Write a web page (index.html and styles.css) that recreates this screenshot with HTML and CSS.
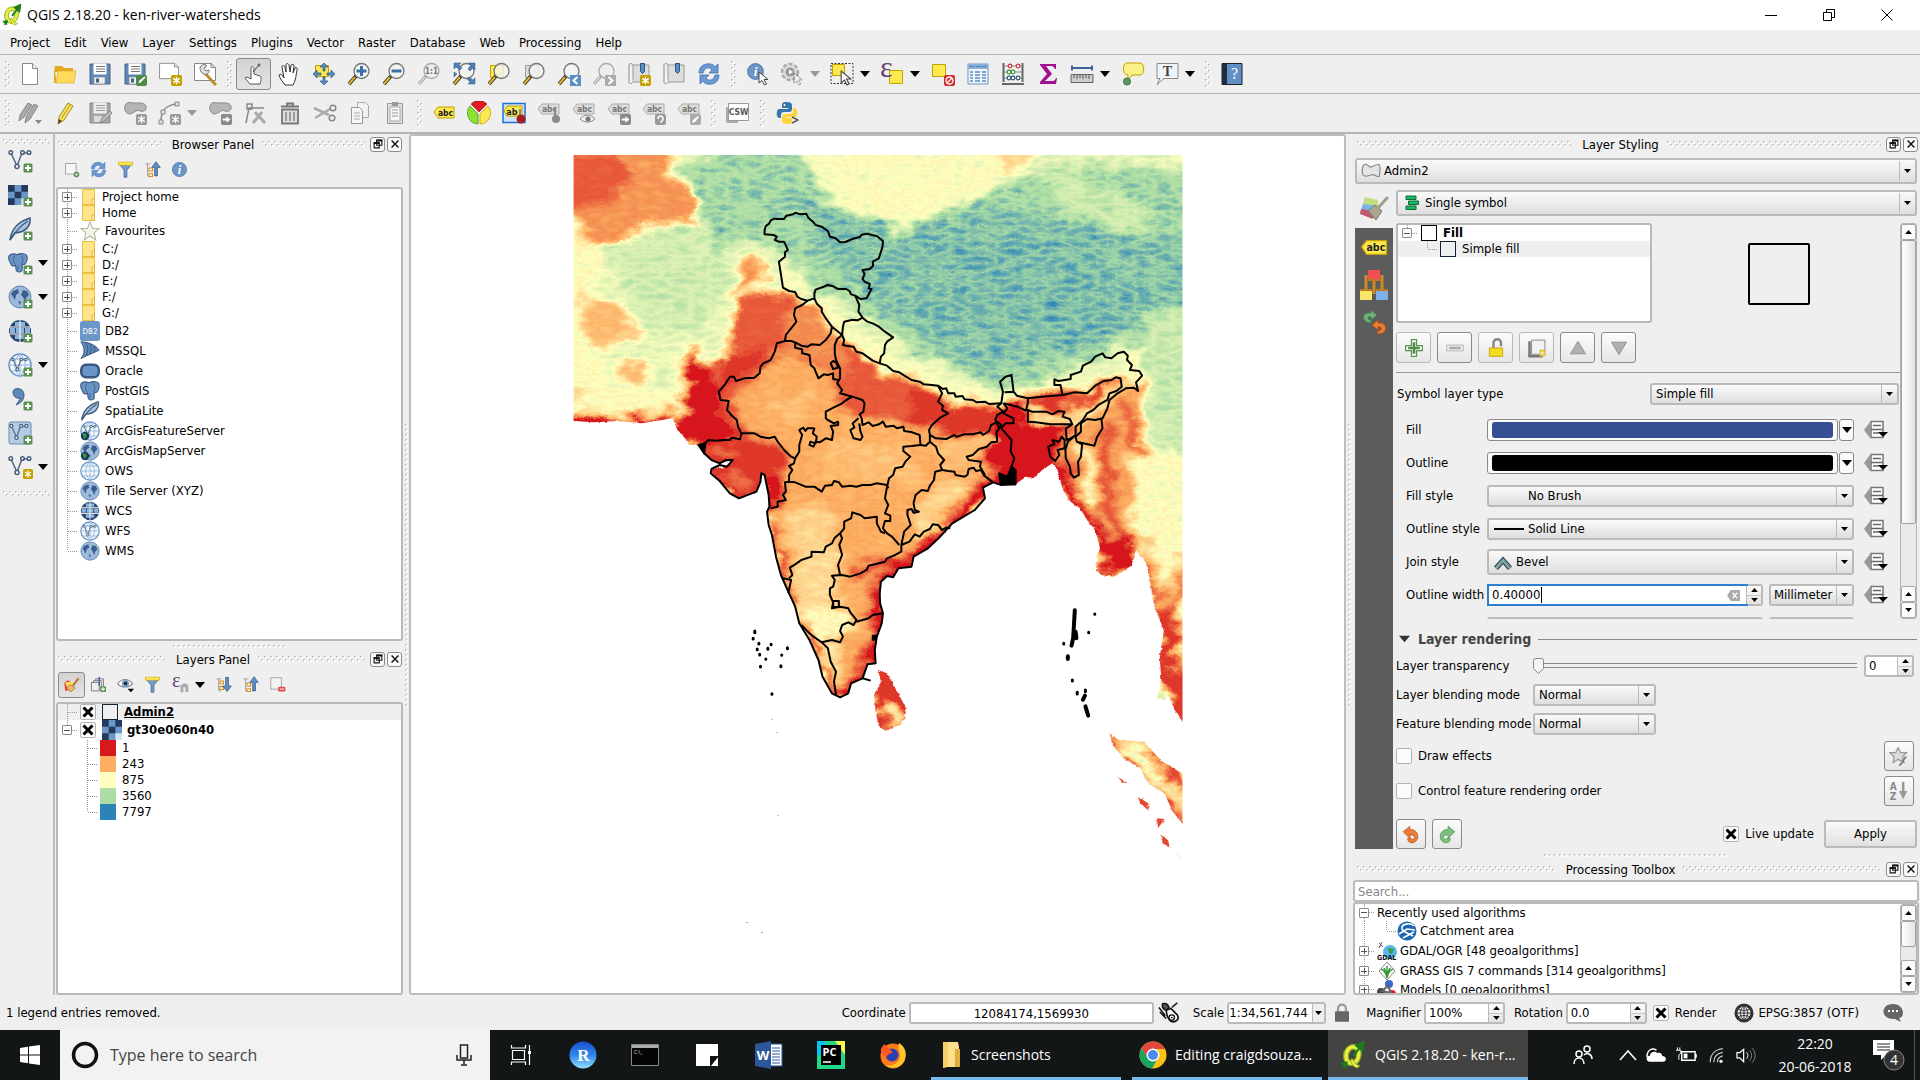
FILE: index.html
```
<!DOCTYPE html>
<html lang="en">
<head>
<meta charset="utf-8">
<title>QGIS 2.18.20 - ken-river-watersheds</title>
<link rel="stylesheet" href="styles.css">
</head>
<body>
<svg class="sprite" aria-hidden="true">
<symbol id="plus" viewBox="0 0 10 10"><rect x=".5" y=".5" width="9" height="9" rx="1.5" fill="#5a9150"/><path d="M5 2v6M2 5h6" stroke="#fff" stroke-width="1.8"/></symbol>
<symbol id="sun" viewBox="0 0 10 10"><rect width="10" height="10" rx="1.5" fill="#c4a000"/><path d="M5 1.500v7M2 3l6 4M8 3l-6 4" stroke="#fff" stroke-width="1.3"/></symbol>
<symbol id="gsun" viewBox="0 0 10 10"><rect width="10" height="10" rx="1.5" fill="#9a9a9a"/><path d="M5 1.500v7M2 3l6 4M8 3l-6 4" stroke="#fff" stroke-width="1.2"/></symbol>
<symbol id="garrow" viewBox="0 0 10 10"><rect width="10" height="10" rx="1.5" fill="#8a8a8a"/><path d="M1.500 4h3.500V2l3.500 3L5 8V6H1.500z" fill="#fff"/></symbol>
<symbol id="cursor" viewBox="0 0 12 15"><path d="M1 1v11l3-2.500 2.500 4.500 2-1L6 8.500h4z" fill="#fff" stroke="#444"/></symbol>
<symbol id="logo" viewBox="0 0 24 24"><path d="M13 3C7 3 4 8 4 13s3 8 7 8c5 0 8-5 8-10S17 3 13 3zm-1 4c2 0 3 2 3 4 0 4-2 6-4 6-2 0-3-2-3-4 0-3 2-6 4-6z" fill="#e6f03c" stroke="#8aa52a" fill-rule="evenodd"/><path d="M11 15c2 2 3 6 7 6l-2 2c-3 0-5-3-6-6z" fill="#e6f03c" stroke="#8aa52a" stroke-width=".7"/><path d="m12 13 8-10M15 4l6-3-1 7z" stroke="#1f7a1f" stroke-width="2" fill="#1f7a1f"/><path d="m3 23 4-4M2 19l5-1-1 5z" stroke="#1f7a1f" fill="#1f7a1f"/></symbol>
<symbol id="new" viewBox="0 0 24 24"><path d="M4.500 1.500h10l5 5v16h-15z" fill="#fff" stroke="#888"/><path d="M14.500 1.500v5h5" fill="#eee" stroke="#888"/></symbol>
<symbol id="open" viewBox="0 0 24 24"><path d="M2 4h7l2 2h9v4H2z" fill="#e5a823"/><path d="M1 21V4l3 17z" fill="#e5a823"/><path d="M3 21 5 9h18l-2 12z" fill="#ffda5b" stroke="#e0b030" stroke-width=".7"/></symbol>
<symbol id="save" viewBox="0 0 24 24"><path d="M2 2h20v20H2z" fill="#5f88b8" stroke="#44618a"/><path d="M5.500 1.500h13v11h-13z" fill="#fff"/><path d="M8 4.500h9M8 7h9M8 9.500h9" stroke="#777"/><path d="M6 15h11v7H6z" fill="#eee" stroke="#888" stroke-width=".6"/><path d="M8 16.500h3v4H8z" fill="#44618a"/></symbol>
<symbol id="saveas" viewBox="0 0 24 24"><use href="#save" width="24" height="24"/><rect x="13" y="13" width="11" height="11" rx="2" fill="#4f8a46"/><path d="m15.500 21.500 1-3 5-4 1 1-5 5z" fill="#fff"/></symbol>
<symbol id="comp" viewBox="0 0 24 20"><path d="M1.500 1.500h17l4 4v13h-21z" fill="#fff" stroke="#888"/><path d="M18 1.500v4h4.500" fill="#ddd" stroke="#888"/></symbol>
<symbol id="newcomp" viewBox="0 0 24 24"><use href="#comp" width="22" height="18"/><use href="#sun" x="13" y="13" width="11" height="11"/></symbol>
<symbol id="compmgr" viewBox="0 0 24 24"><use href="#comp" width="24" height="20"/><path d="m10 9 10 11 3 3" stroke="#b98f2c" stroke-width="3"/><path d="M7 6c0-3 5-5 7-2l-3 2 2 3 3-1c1 4-4 6-7 3-1-1-2-3-2-5z" fill="#ddd" stroke="#777"/></symbol>
<symbol id="touch" viewBox="0 0 24 24"><path d="M8 22 3 16l2-1 4 2V6c0-2 2-2 3 0v6l6 2c2 1 1 5 0 8z" fill="#fff" stroke="#555"/><path d="m11 10 6-7M17 1.500v3M15.500 3h3" stroke="#444"/></symbol>
<symbol id="hand" viewBox="0 0 24 24"><path d="M8 23c-2-3-5-6-6-10 1-1 2-1 3 0l2 3L5 5c0-2 2-2 3 0l1 5V3c0-2 2-2 3 0l1 7 1-7c1-1 3-1 3 1l-1 7 2-5c1-1 3 0 2 2-1 5-1 10-4 15z" fill="#fff" stroke="#333"/></symbol>
<symbol id="pansel" viewBox="0 0 24 24"><path d="M3.500 3.500h13v11h-13z" fill="#fce94f" stroke="#c4a000"/><g fill="#5a8ec4" stroke="#2d5582" stroke-width=".7"><path d="m12 1 4 4h-3v4h-2V5H8zM12 23l4-4h-3v-4h-2v4H8zM1 12l4-4v3h4v2H5v3zM23 12l-4-4v3h-4v2h4v3z"/></g></symbol>
<symbol id="lens" viewBox="0 0 24 24"><path d="m9 14-7 8" stroke="#222" stroke-width="3.500"/><path d="m8 15-6 7" stroke="#e5b52a" stroke-width="2"/><circle cx="14.500" cy="9" r="7.500" fill="#f2f4f2" fill-opacity=".82" stroke="#777" stroke-width="1.300"/></symbol>
<symbol id="glens" viewBox="0 0 24 24"><path d="m9 14-7 8" stroke="#999" stroke-width="3"/><path d="m8 15-6 7" stroke="#ddd" stroke-width="1.500"/><circle cx="14.500" cy="9" r="7.500" fill="#eee" stroke="#aaa" stroke-width="1.300"/></symbol>
<symbol id="zin" viewBox="0 0 24 24"><use href="#lens" width="24" height="24"/><path d="M14.500 4v10M9.500 9h10" stroke="#3d6fa8" stroke-width="3"/></symbol>
<symbol id="zout" viewBox="0 0 24 24"><use href="#lens" width="24" height="24"/><path d="M9.500 9h10" stroke="#3d6fa8" stroke-width="3"/></symbol>
<symbol id="z11" viewBox="0 0 24 24"><use href="#glens" width="24" height="24"/><text x="14.500" y="12" font-size="8" font-weight="bold" text-anchor="middle" fill="#777">1:1</text></symbol>
<symbol id="zfull" viewBox="0 0 24 24"><use href="#lens" width="24" height="24"/><g fill="#4f80b5" stroke="#2d5582" stroke-width=".5"><path d="M2 1h7L7 3l3 3-2 2-4-3-2 2zM23 1v7l-2-2-3 3-2-2 3-4-2-2zM23 22h-7l2-2-3-3 2-2 4 3 2-2zM2 10l3 2-3 3z"/></g></symbol>
<symbol id="zsel" viewBox="0 0 24 24"><path d="M3.500 3.500h13v12h-13z" fill="#fce94f" stroke="#c4a000"/><use href="#lens" width="24" height="24"/></symbol>
<symbol id="zlay" viewBox="0 0 24 24"><path d="M3.500 3.500h13v12h-13z" fill="#ddd" stroke="#999"/><use href="#lens" width="24" height="24"/></symbol>
<symbol id="zlast" viewBox="0 0 24 24"><use href="#lens" width="24" height="24"/><rect x="13" y="13" width="11" height="11" fill="#5a8ec4"/><path d="m20.500 15-4 3.500 4 3.500" stroke="#fff" stroke-width="2" fill="none"/></symbol>
<symbol id="znext" viewBox="0 0 24 24"><use href="#glens" width="24" height="24"/><rect x="13" y="13" width="11" height="11" fill="#aaa"/><path d="m16.500 15 4 3.500-4 3.500" stroke="#fff" stroke-width="2" fill="none"/></symbol>
<symbol id="bm" viewBox="0 0 24 24"><path d="M2 3c0-2 4-2 4 0v17h16V3H6" fill="#ddd" stroke="#999"/><path d="M2 3v17c0 2 3 2 4 0" fill="#f5f5f5" stroke="#888"/><path d="M13.500 1.500h4v8l-2 2-2-2z" fill="#5a8ec4" stroke="#2d5582"/></symbol>
<symbol id="bmnew" viewBox="0 0 24 24"><use href="#bm" width="24" height="24"/><use href="#sun" x="13" y="13" width="11" height="11"/></symbol>
<symbol id="refresh" viewBox="0 0 24 24"><path d="M2 11C2 4 8 1 13 2c2 0 4 1 5 3l3-3v9h-9l3-3c-3-4-8-2-9 3zM22 13c0 7-6 10-11 9-2 0-4-1-5-3l-3 3v-9h9l-3 3c3 4 8 2 9-3z" fill="#6a9ad4" stroke="#3f6fae" stroke-width=".8"/></symbol>
<symbol id="info" viewBox="0 0 24 24"><circle cx="12" cy="12" r="10" fill="#6a96c8" stroke="#3f6a9e"/><text x="12" y="18" font-size="17" font-style="italic" font-weight="bold" font-family="Liberation Serif" text-anchor="middle" fill="#fff">i</text></symbol>
<symbol id="ident" viewBox="0 0 24 24"><use href="#info" width="19" height="19"/><use href="#cursor" x="12" y="9" width="12" height="15"/></symbol>
<symbol id="gear" viewBox="0 0 24 24"><circle cx="10" cy="10" r="8" fill="#ddd" stroke="#aaa" stroke-width="2.500" stroke-dasharray="4 2"/><circle cx="10" cy="10" r="4.500" fill="#999"/><path d="m9 7.500 4 2.500-4 2.500z" fill="#fff"/><use href="#cursor" x="13" y="10" width="11" height="14" opacity=".5"/></symbol>
<symbol id="select" viewBox="0 0 24 24"><path d="M1 1.500h22v20H1z" fill="none" stroke="#333" stroke-dasharray="2 1.500"/><path d="M2.500 2.500h12v11h-12z" fill="#fce94f" stroke="#c4a000"/><use href="#cursor" x="10" y="8" width="13" height="16"/></symbol>
<symbol id="eps" viewBox="0 0 24 24"><path d="M9.500 8.500h13v13h-13z" fill="#fce94f" stroke="#c4a000"/><text x="0" y="15" font-size="30" font-family="Liberation Serif" fill="#6b3f78">ε</text></symbol>
<symbol id="desel" viewBox="0 0 24 24"><path d="M1.500 2.500h13v12h-13z" fill="#fce94f" stroke="#c4a000"/><rect x="13" y="13" width="11" height="11" rx="2" fill="#d42a2a"/><circle cx="18.500" cy="18.500" r="3.500" fill="none" stroke="#fff" stroke-width="1.300"/><path d="m16 21 5-5" stroke="#fff" stroke-width="1.300"/></symbol>
<symbol id="table" viewBox="0 0 24 24"><path d="M2 2h20v20H2z" fill="#eef4fa" stroke="#6a96c8"/><path d="M2 2h20v5H2z" fill="#8fb4dc"/><path d="M4 10h3M9 10h5M16 10h4M4 13h3M9 13h5M16 13h4M4 16h3M9 16h5M16 16h4M4 19h3M9 19h5M16 19h4M3 4.500h5M9 4.500h12" stroke="#5a8ec4" stroke-width="1.300"/></symbol>
<symbol id="abacus" viewBox="0 0 24 24"><path d="M2.500 1v19M21.500 1v19M1 22h22" stroke="#666" stroke-width="2"/><path d="M3 4h18M3 10h18M3 16h18" stroke="#888"/><g stroke-width="1.200" fill="#fff"><g stroke="#c33"><circle cx="9" cy="4" r="1.800"/><circle cx="17" cy="4" r="1.800"/></g><g stroke="#393"><circle cx="8" cy="10" r="1.800"/><circle cx="12" cy="10" r="1.800"/></g><g stroke="#357"><circle cx="8" cy="16" r="1.800"/><circle cx="12" cy="16" r="1.800"/><circle cx="17" cy="16" r="1.800"/></g></g></symbol>
<symbol id="sigma" viewBox="0 0 24 24"><path d="M4 2h16v5h-1c-1-2-2-3-4-3h-5l6 8-7 7h7c3 0 3-1 4-3h1l-1 6H4v-2l7-8-7-9z" fill="#a0108f"/></symbol>
<symbol id="ruler" viewBox="0 0 24 24"><path d="M2 6h20M2 3.500v5M22 3.500v5" stroke="#3d6399" stroke-width="2"/><path d="M1 12.500h22v8H1z" fill="#ccc" stroke="#666"/><path d="M4 13v3M7 13v4M10 13v3M13 13v4M16 13v3M19 13v4" stroke="#555"/></symbol>
<symbol id="tip" viewBox="0 0 24 24"><path d="M6 1h13c5 0 5 12 0 12h-8l-4 5v-5C1 13 1 1 6 1z" fill="#faf08a" stroke="#c4a000"/><circle cx="6" cy="19.500" r="3.500" fill="#5a9a60" stroke="#3c6d40"/></symbol>
<symbol id="text" viewBox="0 0 24 24"><path d="M2 1.500h21v15H9l-7 6 3-6H2z" fill="#eef4f8" stroke="#888"/><text x="12.500" y="13.500" font-size="14" font-family="Liberation Serif" font-weight="bold" text-anchor="middle" fill="#444">T</text></symbol>
<symbol id="help" viewBox="0 0 24 24"><path d="M2 1.500h20v21H2z" fill="#5f8fc4" stroke="#222"/><path d="M2 1.500h5v21H2z" fill="#1f2d40"/><text x="14.500" y="17" font-size="16" font-family="Liberation Serif" text-anchor="middle" fill="#fff">?</text></symbol>
<symbol id="gpens" viewBox="0 0 24 24"><g fill="#aaa" stroke="#777" stroke-width=".8"><path d="m1 20 1-6 8-12 4 2-8 12z"/><path d="m7 22 1-6 8-13 4 2-8 13z"/></g><path d="M17 19h7l-3.500 4z" fill="#888"/></symbol>
<symbol id="pen" viewBox="0 0 24 24"><path d="m5 23 1-7 9-14 5 3-9 14z" fill="#f8e45c" stroke="#a08a20"/><path d="m5 23 1-5 3 2z" fill="#444"/><path d="m8.500 17.500 9-14" stroke="#b09520"/></symbol>
<symbol id="gsave" viewBox="0 0 24 24"><path d="M2 2h20v20H2z" fill="#a5a5a5" stroke="#888"/><path d="M5.500 1.500h13v11h-13z" fill="#eee"/><path d="M8 4.500h9M8 7h9M8 9.500h9" stroke="#999"/><path d="M6 15h8v6H6z" fill="#ddd"/><path d="m12 22 2-5 8-7 2 2-8 8z" fill="#bbb" stroke="#888"/></symbol>
<symbol id="blob" viewBox="0 0 24 24"><path d="M2 5c1-5 6-3 10-3s9-1 11 3c1 5-3 6-6 5-3-2-6 2-10 3-4 0-6-4-5-8z" fill="#b5b5b5" stroke="#888"/></symbol>
<symbol id="addfeat" viewBox="0 0 24 24"><use href="#blob" width="24" height="24"/><use href="#gsun" x="13" y="13" width="11" height="11"/></symbol>
<symbol id="movefeat" viewBox="0 0 24 24"><use href="#blob" width="24" height="24"/><use href="#garrow" x="13" y="13" width="11" height="11"/></symbol>
<symbol id="curve" viewBox="0 0 24 24"><path d="M4 20C4 9 9 4 20 3" fill="none" stroke="#888" stroke-width="1.500"/><path d="M2 19h4v4H2zM4 9h4v4H4zM18 1h4v4h-4z" fill="#ddd" stroke="#888"/><use href="#gsun" x="13" y="13" width="11" height="11"/></symbol>
<symbol id="node" viewBox="0 0 24 24"><path d="M3 22 6 7h15M4 3h5v5H4z" fill="none" stroke="#888" stroke-width="1.500"/><path d="m10 22 9-11M12 11l10 11" stroke="#aaa" stroke-width="3"/></symbol>
<symbol id="trash" viewBox="0 0 24 24"><path d="M4 8.500h16v14H4zM3 5.500h18M9 5V2.500h6V5" fill="#ddd" stroke="#777" stroke-width="1.800"/><path d="M8 11v9M12 11v9M16 11v9" stroke="#888" stroke-width="1.500"/></symbol>
<symbol id="cut" viewBox="0 0 24 24"><path d="m1 7 15 7M2 17 17 8" stroke="#aaa" stroke-width="2.500"/><circle cx="20" cy="7" r="2.800" fill="none" stroke="#888" stroke-width="1.500"/><circle cx="19" cy="17" r="2.800" fill="none" stroke="#888" stroke-width="1.500"/></symbol>
<symbol id="copy" viewBox="0 0 24 24"><path d="M9.500 1.500h8l3 3v12h-11z" fill="#f2f2f2" stroke="#aaa"/><path d="M3.500 6.500h8l3 3v13h-11z" fill="#f5f5f5" stroke="#999"/><path d="M6 12h6M6 15h6M6 18h6" stroke="#aaa"/></symbol>
<symbol id="paste" viewBox="0 0 24 24"><path d="M4.500 2.500h15v20h-15z" fill="#ddd" stroke="#999"/><path d="M7 6h10v14H7z" fill="#f8f8f8" stroke="#aaa"/><path d="M9 1h6v4H9z" fill="#999"/><path d="M9 9h6M9 12h6M9 15h6" stroke="#999"/></symbol>
<symbol id="abc" viewBox="0 0 24 24"><path d="m2 11 4-5h16v11H6z" fill="#fce94f" stroke="#c4a000"/><text x="13.500" y="14.500" font-size="8.500" font-weight="bold" text-anchor="middle" fill="#222">abc</text></symbol>
<symbol id="gabc" viewBox="0 0 24 24"><path d="m1 8 4-5h17v10H5z" fill="#ddd" stroke="#aaa"/><text x="12.500" y="11" font-size="8.500" font-weight="bold" text-anchor="middle" fill="#777">abc</text></symbol>
<symbol id="pie" viewBox="0 0 24 24"><path d="m12 11-8-8a11 11 0 0 1 16 0z" fill="#e01b24" stroke="#8a1010" stroke-width=".6"/><path d="M11 23a11 11 0 0 1-8-18l8 8z" fill="#8ae234" stroke="#4e9a06" stroke-width=".8"/><path d="M13 23a11 11 0 0 0 8-18l-8 8z" fill="#fce94f" stroke="#c4a000" stroke-width=".8"/></symbol>
<symbol id="lblpin" viewBox="0 0 24 24"><path d="M1 2.500h22v19H1z" fill="#cfe3f7" stroke="#1c71d8" stroke-width="1.500"/><path d="m2 10 3-5h15v10H5z" fill="#fce94f" stroke="#c4a000"/><text x="10" y="13.500" font-size="9" font-weight="bold" text-anchor="middle" fill="#222">ab</text><path d="M18 8v9" stroke="#888" stroke-width="2"/><circle cx="19" cy="18" r="4.500" fill="#a51d1d"/></symbol>
<symbol id="glpin" viewBox="0 0 24 24"><use href="#gabc" width="24" height="24"/><path d="M18 7v9" stroke="#888" stroke-width="2"/><circle cx="19" cy="18" r="4" fill="#8a8a8a"/></symbol>
<symbol id="gleye" viewBox="0 0 24 24"><use href="#gabc" width="24" height="24"/><path d="M8 18c4-5 11-5 15 0-4 4-11 4-15 0z" fill="#eee" stroke="#888"/><circle cx="16" cy="18" r="2.500" fill="#777"/></symbol>
<symbol id="glmove" viewBox="0 0 24 24"><use href="#gabc" width="24" height="24"/><use href="#garrow" x="13" y="13" width="11" height="11"/></symbol>
<symbol id="glrot" viewBox="0 0 24 24"><use href="#gabc" width="24" height="24"/><rect x="13" y="13" width="11" height="11" rx="2" fill="#9a9a9a"/><path d="M16 18c0-4 5-4 5 0 0 2-2 3-3 3" fill="none" stroke="#fff" stroke-width="1.500"/></symbol>
<symbol id="gledit" viewBox="0 0 24 24"><use href="#gabc" width="24" height="24"/><rect x="13" y="13" width="11" height="11" rx="2" fill="#aaa"/><path d="m15 22 1-3 5-4 1 1-4 5z" fill="#fff"/></symbol>
<symbol id="csw" viewBox="0 0 24 24"><path d="M1 21h11M1 21V6" stroke="#aaa" stroke-width="2"/><path d="M2.500 2.500h20v17h-20z" fill="#fff" stroke="#999"/><text x="12.500" y="14" font-size="8.500" font-weight="bold" text-anchor="middle" fill="#555">CSW</text></symbol>
<symbol id="python" viewBox="0 0 24 24"><path d="M12 1C7 1 7 2 7 5v2h6v1H4c-3 0-3 9 0 9h2v-3c0-2 1-3 3-3h5c2 0 3-1 3-3V4c0-2-2-3-5-3z" fill="#3776ab"/><circle cx="9.500" cy="4" r="1" fill="#fff"/><path d="M12 23c5 0 5-1 5-4v-2h-6v-1h9c3 0 3-8 0-9h-2v3c0 2-1 3-3 3h-5c-2 0-3 1-3 3v4c0 2 2 3 5 3z" fill="#ffd43b"/><path d="m17 16 6 3-6 3" fill="none" stroke="#555" stroke-width="1.500"/></symbol>
<symbol id="vec" viewBox="0 0 24 24"><g fill="none" stroke="#5a6a7a" stroke-width="1.500"><path d="m3 4 6 13 5-13h6"/><g fill="#fff" stroke="#44607e"><circle cx="2.800" cy="3.500" r="1.800"/><circle cx="9" cy="17.500" r="2"/><circle cx="14.500" cy="3.500" r="1.800"/><circle cx="21" cy="3.500" r="1.800"/></g></g></symbol>
<symbol id="ras" viewBox="0 0 24 24"><path d="M0 0h24v24H0z" fill="#6a96c8"/><path d="M0 0h8v8H0zM16 0h8v8h-8zM8 8h8v8H8zM0 16h8v8H0z" fill="#243a5c"/><path d="M16 16h8v8h-8z" fill="#d4e2f2"/></symbol>
<symbol id="feather" viewBox="0 0 24 24"><path d="M2 23C3 15 8 5 22 1c1 8-4 14-15 15z" fill="#a9c4e0" stroke="#3d5a7c" stroke-width="1.500"/><path d="M2 23C7 15 12 9 20 4" fill="none" stroke="#3d5a7c" stroke-width="1.300"/></symbol>
<symbol id="eleph" viewBox="0 0 24 24"><path d="M1 4c2-4 7-3 10-2 4-2 12-2 12 3 0 4-2 8-4 9h-2v7c-2 3-6 2-7 0l-1-6c-3 1-4 1-5-1C2 11 0 8 1 4z" fill="#6a94c4" stroke="#365a86" stroke-width="1.300"/><path d="M8 3c-2 4-2 8 1 11M16 3c3 4 2 8 0 11M12 15v5" stroke="#365a86" fill="none"/></symbol>
<symbol id="gmap" viewBox="0 0 24 24"><circle cx="12" cy="12" r="11" fill="#9dbadb" stroke="#5f83ae"/><path d="m5 6 5-2 1 4-3 2-1 5-2-3-2-3zM15 5l4 1 2 4-3 3-1 4-2-5-2-2zM10 16l3 1-1 3z" fill="#3a5f8c"/></symbol>
<symbol id="gwcs" viewBox="0 0 24 24"><circle cx="12" cy="12" r="11" fill="#28476e"/><path d="M7 3h10v4H7zM2 9h5v5H2zM8 9h8v5H8zM17 9h5v5h-5zM7 16h10v4H7z" fill="#8fb4dc"/><path d="M12 1v22M1 8h22M1 15h22" stroke="#fff" stroke-width="1"/></symbol>
<symbol id="gows" viewBox="0 0 24 24"><circle cx="12" cy="12" r="11" fill="#f2f7fc" stroke="#6a96c8" stroke-width="1.500"/><path d="M12 1v22M1 12h22M3 6h18M3 18h18M12 1c-7 6-7 16 0 22M12 1c7 6 7 16 0 22" fill="none" stroke="#8fb4dc"/></symbol>
<symbol id="gwfs" viewBox="0 0 24 24"><use href="#gows" width="24" height="24"/><use href="#vec" x="3" y="4" width="17" height="17"/></symbol>
<symbol id="comma" viewBox="0 0 24 24"><path d="M5 5c0-5 11-5 11 3 0 5-3 8-8 10 2-3 4-5 4-7-3 1-7-1-7-6z" fill="#5f88b8" stroke="#3d5a7c"/></symbol>
<symbol id="virt" viewBox="0 0 24 24"><rect x="1" y="1" width="22" height="22" rx="2" fill="#b4cce4" stroke="#6a8aae"/><use href="#vec" x="1" y="2" width="20" height="20"/></symbol>
<symbol id="arcf" viewBox="0 0 24 24"><use href="#gwfs" width="24" height="24"/><circle cx="6" cy="18" r="5" fill="#173a5c"/><path d="m3 15 4 0 1 3-3 4z" fill="#3c9a3c"/></symbol>
<symbol id="arcm" viewBox="0 0 24 24"><use href="#gmap" width="24" height="24"/><circle cx="6" cy="18" r="5" fill="#173a5c"/><path d="m3 15 4 0 1 3-3 4z" fill="#3c9a3c"/></symbol>
<symbol id="folder" viewBox="0 0 13 16"><path d="M0 0h12.500v16H0z" fill="#ffe38d"/><path d="M.5.5h12v15H.5z" fill="none" stroke="#eebf3a"/><path d="M10 10h2.500v5.500H10z" fill="#ffeeb5" stroke="#e0ac2a" stroke-width=".8"/></symbol>
<symbol id="star" viewBox="0 0 24 24"><path d="m12 1 3 8h8l-6 5 2 9-7-5-7 5 2-9-6-5h8z" fill="#f4f4ec" stroke="#b8b8a0" stroke-width="1.300"/></symbol>
<symbol id="db2" viewBox="0 0 24 24"><rect width="24" height="24" rx="3" fill="#6a96c8"/><text x="12" y="15" font-size="9.500" text-anchor="middle" fill="#fff">DB2</text></symbol>
<symbol id="mssql" viewBox="0 0 24 24"><path d="M1 1c8 0 17 3 22 10L1 21c5-6 5-13 0-20z" fill="#5f88b8" stroke="#2e4f78"/><path d="M7 2c3 5 3 11 0 16M12 4c2 4 2 8 0 12M17 6c1 3 1 5 0 8" stroke="#2e4f78" fill="none"/></symbol>
<symbol id="oracle" viewBox="0 0 24 24"><rect x="1.500" y="4.500" width="21" height="15" rx="6" fill="#6a96c8" stroke="#3a577c" stroke-width="3"/></symbol>
<symbol id="addl" viewBox="0 0 24 24"><path d="M3.500 3.500h15v15h-15z" fill="#f5f5f5" stroke="#888"/><circle cx="19" cy="19" r="4" fill="#5a9150"/><path d="M19 17v4M17 19h4" stroke="#fff"/></symbol>
<symbol id="reml" viewBox="0 0 24 24"><path d="M2.500 2.500h15v16h-15z" fill="#f5f5f5" stroke="#888"/><rect x="13" y="15" width="10" height="7" rx="2" fill="#e4434a"/><path d="M15 18.500h6" stroke="#fff" stroke-width="1.500"/></symbol>
<symbol id="filter" viewBox="0 0 24 24"><path d="M2 3h20l-8 10v10h-4V13z" fill="#6f9bce" stroke="#44618a"/><path d="M2 1.500h20V6H2z" fill="#fce94f" stroke="#c4a000" stroke-width=".7"/></symbol>
<symbol id="collapse" viewBox="0 0 24 24"><path d="M2 4h7M5 4v17h4" stroke="#888" fill="none"/><path d="M7 10h5v4H7zM7 18h5v4H7z" fill="#fff" stroke="#e08a10" stroke-width="1.500"/><path d="m17 1 6 8h-4v12h-4V9h-4z" fill="#5f8fc4" stroke="#2d5582"/></symbol>
<symbol id="expand" viewBox="0 0 24 24"><path d="M2 4h7M5 4v17h4" stroke="#888" fill="none"/><path d="M7 7h5v4H7zM7 15h5v4H7z" fill="#fff" stroke="#e08a10" stroke-width="1.500"/><path d="m17 22 6-8h-4V2h-4v12h-4z" fill="#5f8fc4" stroke="#2d5582"/></symbol>
<symbol id="brush" viewBox="0 0 24 24"><path d="m2 9 5-3 6 4-2 9-8 2z" fill="#e44"/><path d="m3 9 9-1 2 6-8 2z" fill="#fce94f"/><path d="m9 21-4-4 5-5 7 5-5 5z" fill="#e9b96e" stroke="#a06a20"/><path d="m14 14 8-11" stroke="#b9782c" stroke-width="3"/></symbol>
<symbol id="group" viewBox="0 0 24 24"><path d="M8 4h11v12H8z" fill="#eee" stroke="#777" stroke-width="1.300"/><path d="M5 6.500h11v12H5z" fill="#eee" stroke="#777" stroke-width="1.300"/><path d="M2 9h11v12H2z" fill="#eee" stroke="#777" stroke-width="1.300"/><path d="M13 14V1" stroke="#3d6399" stroke-width="2"/><use href="#plus" x="14" y="14" width="9" height="9"/></symbol>
<symbol id="eye" viewBox="0 0 24 24"><path d="M1 11c5-8 16-8 21 0-5 6-16 6-21 0z" fill="#fff" stroke="#888" stroke-width="1.500"/><circle cx="12" cy="10.500" r="5" fill="#6a96c8"/><circle cx="12" cy="10.500" r="2.300" fill="#222"/><path d="M15 18h9l-4.500 5z"/></symbol>
<symbol id="epsf" viewBox="0 0 24 24"><text x="0" y="15" font-size="29" font-family="Liberation Serif" fill="#6b3f78">ε</text><path d="M12 14c4-5 10-4 11 0v9h-4v-7h-3v7h-4z" fill="#aaa"/></symbol>
<symbol id="poly" viewBox="0 0 24 20"><path d="M2 4c2-4 5-2 9 1 3 1 6-4 11-3 2 3 1 11 0 15-3 1-6-4-10-2-4 1-8 3-10 0-1-3-1-8 0-11z" fill="#e4e4e4" stroke="#888" stroke-width="1.500"/></symbol>
<symbol id="single" viewBox="0 0 14 16"><g fill="#1fb860" stroke="#0a6a3a" stroke-width="1"><path d="M1 1h10v3.500H1zM3.500 6h10v3.500h-10zM1 11h10v3.500H1z"/></g></symbol>
<symbol id="bigbrush" viewBox="0 0 30 26"><path d="m6 2 13 3-4 17L1 17z" fill="#7ab4e8"/><path d="m6 1 13 3v6L4 8z" fill="#c4de86"/><path d="m2 13 12 2v8L1 18z" fill="#c05870"/><path d="m9 15 7-6 7 6-6 9z" fill="#aaa590" stroke="#7c7864"/><path d="m19 12 9-10" stroke="#a09e8a" stroke-width="3" stroke-linecap="round"/></symbol>
<symbol id="brushes" viewBox="0 0 30 30"><path d="M7 5v14M23 5v14M15 8v16" stroke="#d08a28" stroke-width="3"/><path d="M9 0h12v9H9z" fill="#f05050"/><path d="M9 9h12v2H9zM1 19h12v2H1zM17 19h12v2H17z" fill="#c07a20"/><path d="M1 21h12v9H1z" fill="#fce66a"/><path d="M17 21h12v9H17z" fill="#7fb0ea"/></symbol>
<symbol id="hist" viewBox="0 0 26 26"><path d="M10 14C0 14 0 2 10 4V1l6 5-6 5V8c-4-1-4 3 0 3z" fill="#6fb07a" stroke="#3a7a4a" stroke-width=".7"/><path d="M16 25c12 0 11-12 1-11v-3l-6 5 6 5v-3c4-1 5 3 0 4z" fill="#ee7c30" stroke="#a84c10" stroke-width=".7"/></symbol>
<symbol id="bigplus" viewBox="0 0 24 24"><path d="M9 2h6v7h7v6h-7v7H9v-7H2V9h7z" fill="#fff" stroke="#5a9150" stroke-width="1.500"/><path d="M12 5v14M5 12h14" stroke="#4f8a46" stroke-width="3"/></symbol>
<symbol id="bigminus" viewBox="0 0 24 24"><path d="M2 8.500h20v7H2z" fill="#eee" stroke="#aaa"/><path d="M5 12h14" stroke="#aaa" stroke-width="3"/></symbol>
<symbol id="unlock" viewBox="0 0 24 24"><path d="M9 12V6c0-6 9-6 9 0v4" fill="none" stroke="#888" stroke-width="3"/><path d="M4 12h16v10H4z" fill="#f2dc1e" stroke="#c4a000"/></symbol>
<symbol id="dup" viewBox="0 0 24 24"><path d="M3 4v18h16" fill="none" stroke="#777" stroke-width="3"/><path d="M5.500 2.500h16v17h-16z" fill="#f2f2f2" stroke="#777"/><path d="M15 14h7v8h-7z" fill="#e0c030"/><path d="M18.500 15v6M16 18h5" stroke="#fff"/></symbol>
<symbol id="up" viewBox="0 0 24 24"><path d="m12 4 9 15H3z" fill="#b0b0b0" stroke="#888"/></symbol>
<symbol id="down" viewBox="0 0 24 24"><path d="m12 20 9-15H3z" fill="#b0b0b0" stroke="#888"/></symbol>
<symbol id="dd" viewBox="0 0 24 20"><path d="m0 10 6-8v16z" fill="#999"/><path d="M7 1.500h12v16H7z" fill="#fff" stroke="#777" stroke-width="1.500"/><path d="M9 5.500h8M7 9.500h12M9 13h6" stroke="#666" stroke-width="1.500"/><path d="M14 12h10l-5 5z"/></symbol>
<symbol id="bevel" viewBox="0 0 18 16"><path d="m1 14 8-9 8 9" fill="none" stroke="#2c3e50" stroke-width="6"/><path d="m1 14 8-9 8 9" fill="none" stroke="#6a9ab8" stroke-width="3.500"/><path d="m1 14 8-9 8 9" fill="none" stroke="#b8b850"/></symbol>
<symbol id="undo" viewBox="0 0 18 18"><path d="M2 7l6-5v3c8-1 10 11 2 12-3 0-4-2-4-4h3c1 2 4 0 3-2-1-1-2-1-4-1v3z" fill="#ee7c30" stroke="#a84c10" stroke-width=".6"/></symbol>
<symbol id="redo" viewBox="0 0 18 18"><path d="M16 7l-6-5v3C2 4 0 16 8 17c3 0 4-2 4-4H9c-1 2-4 0-3-2 1-1 2-1 4-1v3z" fill="#7cc07c" stroke="#3f8a4f" stroke-width=".6"/></symbol>
<symbol id="fx" viewBox="0 0 24 24"><path d="m11 2 3 6h7l-5 5 2 7-7-4-6 4 1-7-5-5h7z" fill="#ddd" stroke="#999" stroke-width="1.500"/><path d="M12 23c6-1 4-9 9-10" stroke="#777" stroke-width="2" fill="none"/></symbol>
<symbol id="az" viewBox="0 0 24 24"><text x="1" y="11" font-size="12" font-weight="bold" fill="#888">A</text><text x="1" y="23" font-size="12" font-weight="bold" fill="#888">Z</text><path d="M17 1v14" stroke="#999" stroke-width="3"/><path d="M12 12h10l-5 10z" fill="#999"/></symbol>
<symbol id="saga" viewBox="0 0 20 20"><circle cx="10" cy="10" r="9.500" fill="#1c66b0"/><path d="M17 5c-4-4-13-2-12 3 1 3 6 4 11 7M2 13l8-5 8 1M6 17l11-6" fill="none" stroke="#fff" stroke-width="1.600"/></symbol>
<symbol id="gdal" viewBox="0 0 20 20"><circle cx="13" cy="11" r="7" fill="#58b8e8"/><path d="M11 7l6 1-2 5-3-1z" fill="#3a9a4a"/><path d="m2 2 4 4M5 1l-3 6" stroke="#555"/><text x="0" y="19" font-size="7" font-weight="bold" fill="#111">GDAL</text></symbol>
<symbol id="grass" viewBox="0 0 20 20"><path d="m10 1 8 9-8 9-8-9z" fill="#fff" stroke="#888"/><path d="M10 17V5M10 17C9 12 7 9 4 8M10 17c1-5 3-8 6-9M10 17c0-5-2-8-3-10M10 17c0-5 2-8 3-10" stroke="#3a9a3a" fill="none" stroke-width="1.500"/></symbol>
<symbol id="model" viewBox="0 0 20 20"><circle cx="12" cy="4" r="4" fill="#3a6ad0"/><circle cx="4" cy="12" r="4" fill="#444"/><circle cx="15" cy="14" r="4" fill="#e02020"/><path d="M5 11l6-5 3 7z" stroke="#666" stroke-width="2" fill="none"/></symbol>
<symbol id="mouse" viewBox="0 0 24 24"><path d="m9 9 5-2 7 7c3 5-2 9-7 7-3-2-5-8-5-12z" fill="#fff" stroke="#111" stroke-width="1.800"/><path d="M5 2c4-1 6 1 7 4l-3 3C6 8 4 6 5 2zM1 6l7 9M2 11l7 7M15 6l6-5" stroke="#111" stroke-width="1.600" fill="#555"/><circle cx="15" cy="17" r="3" fill="none" stroke="#111" stroke-width="1.500"/><circle cx="15" cy="17" r="1" fill="#111"/></symbol>
<symbol id="lock" viewBox="0 0 16 22"><path d="M3.500 10V6c0-6 9-6 9 0v4" fill="none" stroke="#999" stroke-width="2.500"/><rect y="9" width="16" height="12" rx="1" fill="#666"/></symbol>
<symbol id="crs" viewBox="0 0 20 20"><circle cx="10" cy="10" r="8" fill="#eee" stroke="#333" stroke-width="3"/><path d="M10 1v18M1 10h18M10 3c-5 4-5 10 0 14M10 3c5 4 5 10 0 14M4 6c4 2 8 2 12 0M4 14c4-2 8-2 12 0" fill="none" stroke="#333"/></symbol>
<symbol id="bubble" viewBox="0 0 20 20"><path d="M10 1c12 0 12 14 6 14l2 4-6-3C-3 17-3 1 10 1z" fill="#666"/><path d="M5 8h2M9 8h2M13 8h2" stroke="#fff" stroke-width="2"/></symbol>
<symbol id="dock" viewBox="0 0 14 14"><path d="M5.500 2.500h6v6h-6zM2.500 5.500h6v6h-6z" fill="#fff" stroke="#111" stroke-width="1.300"/><path d="M5 3h7M2 6h7" stroke="#111" stroke-width="2"/></symbol>
<symbol id="x" viewBox="0 0 14 14"><path d="m3 3 8 8M11 3l-8 8" stroke="#111" stroke-width="1.700"/></symbol>
<symbol id="tri" viewBox="0 0 10 6"><path d="M0 0h10L5 6z"/></symbol>
<symbol id="triup" viewBox="0 0 10 6"><path d="M0 6h10L5 0z"/></symbol>
</svg>

<header class="titlebar">
  <svg class="i22"><use href="#logo"/></svg>
  <h1>QGIS 2.18.20 - ken-river-watersheds</h1>
  <div class="winbtns">
    <button aria-label="Minimize"><svg viewBox="0 0 12 12"><path d="M0 6.500h12" stroke="#000"/></svg></button>
    <button aria-label="Restore"><svg viewBox="0 0 12 12"><path d="M.5 3.500h8v8h-8zM3.500 3V.5h8v8H9" fill="none" stroke="#000"/></svg></button>
    <button aria-label="Close"><svg viewBox="0 0 12 12"><path d="m.5.5 11 11M11.500.5l-11 11" stroke="#000"/></svg></button>
  </div>
</header>
<nav class="menubar">
  <a href="#">Project</a><a href="#">Edit</a><a href="#">View</a><a href="#">Layer</a><a href="#">Settings</a><a href="#">Plugins</a><a href="#">Vector</a><a href="#">Raster</a><a href="#">Database</a><a href="#">Web</a><a href="#">Processing</a><a href="#">Help</a>
</nav>
<div class="toolbar">
  <i class="grip"></i>
  <button aria-label="New"><svg><use href="#new"/></svg></button><button aria-label="Open"><svg><use href="#open"/></svg></button><button aria-label="Save"><svg><use href="#save"/></svg></button><button aria-label="Save as"><svg><use href="#saveas"/></svg></button><button aria-label="New composer"><svg><use href="#newcomp"/></svg></button><button aria-label="Composer manager"><svg><use href="#compmgr"/></svg></button>
  <i class="grip"></i>
  <button class="on" aria-label="Touch zoom"><svg><use href="#touch"/></svg></button><button aria-label="Pan"><svg><use href="#hand"/></svg></button><button aria-label="Pan to selection"><svg><use href="#pansel"/></svg></button><button aria-label="Zoom in"><svg><use href="#zin"/></svg></button><button aria-label="Zoom out"><svg><use href="#zout"/></svg></button><button aria-label="Zoom native"><svg><use href="#z11"/></svg></button><button aria-label="Zoom full"><svg><use href="#zfull"/></svg></button><button aria-label="Zoom to selection"><svg><use href="#zsel"/></svg></button><button aria-label="Zoom to layer"><svg><use href="#zlay"/></svg></button><button aria-label="Zoom last"><svg><use href="#zlast"/></svg></button><button aria-label="Zoom next"><svg><use href="#znext"/></svg></button><button aria-label="New bookmark"><svg><use href="#bmnew"/></svg></button><button aria-label="Bookmarks"><svg><use href="#bm"/></svg></button><button aria-label="Refresh"><svg><use href="#refresh"/></svg></button>
  <i class="grip"></i>
  <button aria-label="Identify"><svg><use href="#ident"/></svg></button><button class="m off" aria-label="Action"><svg><use href="#gear"/></svg><svg class="ar"><use href="#tri"/></svg></button><button class="m" aria-label="Select"><svg><use href="#select"/></svg><svg class="ar"><use href="#tri"/></svg></button><button class="m" aria-label="Select by expression"><svg><use href="#eps"/></svg><svg class="ar"><use href="#tri"/></svg></button><button aria-label="Deselect"><svg><use href="#desel"/></svg></button><button aria-label="Attribute table"><svg><use href="#table"/></svg></button><button aria-label="Field calculator"><svg><use href="#abacus"/></svg></button><button aria-label="Statistics"><svg><use href="#sigma"/></svg></button><button class="m" aria-label="Measure"><svg><use href="#ruler"/></svg><svg class="ar"><use href="#tri"/></svg></button><button aria-label="Map tips"><svg><use href="#tip"/></svg></button><button class="m" aria-label="Annotation"><svg><use href="#text"/></svg><svg class="ar"><use href="#tri"/></svg></button>
  <i class="grip"></i>
  <button aria-label="Help"><svg><use href="#help"/></svg></button>
</div>
<div class="toolbar">
  <i class="grip"></i>
  <button aria-label="Current edits"><svg><use href="#gpens"/></svg></button><button aria-label="Toggle editing"><svg><use href="#pen"/></svg></button><button aria-label="Save edits"><svg><use href="#gsave"/></svg></button><button aria-label="Add feature"><svg><use href="#addfeat"/></svg></button><button class="m off" aria-label="Add circular string"><svg><use href="#curve"/></svg><svg class="ar"><use href="#tri"/></svg></button><button aria-label="Move feature"><svg><use href="#movefeat"/></svg></button><button aria-label="Node tool"><svg><use href="#node"/></svg></button><button aria-label="Delete"><svg><use href="#trash"/></svg></button><button aria-label="Cut"><svg><use href="#cut"/></svg></button><button aria-label="Copy"><svg><use href="#copy"/></svg></button><button aria-label="Paste"><svg><use href="#paste"/></svg></button>
  <i class="grip"></i>
  <button aria-label="Labels"><svg><use href="#abc"/></svg></button><button aria-label="Diagrams"><svg><use href="#pie"/></svg></button><button aria-label="Highlight pinned"><svg><use href="#lblpin"/></svg></button><button aria-label="Pin labels"><svg><use href="#glpin"/></svg></button><button aria-label="Show labels"><svg><use href="#gleye"/></svg></button><button aria-label="Move label"><svg><use href="#glmove"/></svg></button><button aria-label="Rotate label"><svg><use href="#glrot"/></svg></button><button aria-label="Change label"><svg><use href="#gledit"/></svg></button>
  <i class="grip"></i>
  <button aria-label="Catalogue"><svg><use href="#csw"/></svg></button>
  <i class="grip"></i>
  <button aria-label="Python console"><svg><use href="#python"/></svg></button>
</div>

<main class="work">
  <aside class="sidebar">
    <i class="hgrip"></i>
    <button aria-label="Add vector"><svg><use href="#vec"/></svg><svg class="bdg"><use href="#plus"/></svg></button>
    <button aria-label="Add raster"><svg class="sm"><use href="#ras"/></svg><svg class="bdg"><use href="#plus"/></svg></button>
    <button aria-label="Add SpatiaLite"><svg><use href="#feather"/></svg><svg class="bdg"><use href="#plus"/></svg></button>
    <button aria-label="Add PostGIS"><svg class="sm"><use href="#eleph"/></svg><svg class="bdg"><use href="#plus"/></svg><svg class="ar"><use href="#tri"/></svg></button>
    <button aria-label="Add WMS"><svg><use href="#gmap"/></svg><svg class="bdg"><use href="#plus"/></svg><svg class="ar"><use href="#tri"/></svg></button>
    <button aria-label="Add WCS"><svg><use href="#gwcs"/></svg><svg class="bdg"><use href="#plus"/></svg></button>
    <button aria-label="Add WFS"><svg><use href="#gwfs"/></svg><svg class="bdg"><use href="#plus"/></svg><svg class="ar"><use href="#tri"/></svg></button>
    <button aria-label="Add delimited text"><svg><use href="#comma"/></svg><svg class="bdg"><use href="#plus"/></svg></button>
    <button aria-label="Add virtual layer"><svg><use href="#virt"/></svg><svg class="bdg"><use href="#plus"/></svg></button>
    <button aria-label="New layer"><svg><use href="#vec"/></svg><svg class="bdg"><use href="#sun"/></svg><svg class="ar"><use href="#tri"/></svg></button>
    <i class="hgrip"></i>
  </aside>

  <section class="ldock">
    <div class="dtitle"><i></i><h2>Browser Panel</h2><i></i><button aria-label="Float"><svg><use href="#dock"/></svg></button><button aria-label="Close"><svg><use href="#x"/></svg></button></div>
    <div class="ptools">
      <button aria-label="Add layer"><svg><use href="#addl"/></svg></button><button aria-label="Refresh"><svg><use href="#refresh"/></svg></button><button aria-label="Filter"><svg><use href="#filter"/></svg></button><button aria-label="Collapse"><svg><use href="#collapse"/></svg></button><button aria-label="Properties"><svg><use href="#info"/></svg></button>
    </div>
    <ul class="tree t1">
      <li class="f"><b class="g"><b class="ex p"></b></b><svg><use href="#folder"/></svg>Project home</li>
      <li class="f"><b class="g"><b class="ex p"></b></b><svg><use href="#folder"/></svg>Home</li>
      <li><b class="g"></b><svg><use href="#star"/></svg>Favourites</li>
      <li class="f"><b class="g"><b class="ex p"></b></b><svg><use href="#folder"/></svg>C:/</li>
      <li class="f"><b class="g"><b class="ex p"></b></b><svg><use href="#folder"/></svg>D:/</li>
      <li class="f"><b class="g"><b class="ex p"></b></b><svg><use href="#folder"/></svg>E:/</li>
      <li class="f"><b class="g"><b class="ex p"></b></b><svg><use href="#folder"/></svg>F:/</li>
      <li class="f"><b class="g"><b class="ex p"></b></b><svg><use href="#folder"/></svg>G:/</li>
      <li><b class="g"></b><svg><use href="#db2"/></svg>DB2</li>
      <li><b class="g"></b><svg><use href="#mssql"/></svg>MSSQL</li>
      <li><b class="g"></b><svg><use href="#oracle"/></svg>Oracle</li>
      <li><b class="g"></b><svg><use href="#eleph"/></svg>PostGIS</li>
      <li><b class="g"></b><svg><use href="#feather"/></svg>SpatiaLite</li>
      <li><b class="g"></b><svg><use href="#arcf"/></svg>ArcGisFeatureServer</li>
      <li><b class="g"></b><svg><use href="#arcm"/></svg>ArcGisMapServer</li>
      <li><b class="g"></b><svg><use href="#gows"/></svg>OWS</li>
      <li><b class="g"></b><svg><use href="#gmap"/></svg>Tile Server (XYZ)</li>
      <li><b class="g"></b><svg><use href="#gwcs"/></svg>WCS</li>
      <li><b class="g"></b><svg><use href="#gwfs"/></svg>WFS</li>
      <li><b class="g end"></b><svg><use href="#gmap"/></svg>WMS</li>
    </ul>
    <div class="split"><i></i></div>
    <div class="dtitle"><i></i><h2>Layers Panel</h2><i></i><button aria-label="Float"><svg><use href="#dock"/></svg></button><button aria-label="Close"><svg><use href="#x"/></svg></button></div>
    <div class="ptools lay">
      <button class="on" aria-label="Styling"><svg><use href="#brush"/></svg></button><button aria-label="Add group"><svg><use href="#group"/></svg></button><button aria-label="Visibility"><svg><use href="#eye"/></svg></button><button aria-label="Filter"><svg><use href="#filter"/></svg></button><button class="m" aria-label="Filter by expression"><svg><use href="#epsf"/></svg><svg class="ar"><use href="#tri"/></svg></button><button aria-label="Expand"><svg><use href="#expand"/></svg></button><button aria-label="Collapse"><svg><use href="#collapse"/></svg></button><button aria-label="Remove"><svg><use href="#reml"/></svg></button>
    </div>
    <ul class="tree t2">
      <li class="f sel"><b class="g"></b><input type="checkbox" checked aria-label="Show Admin2"><b class="sw"></b><strong><u>Admin2</u></strong></li>
      <li><b class="g end"><b class="ex"></b></b><input type="checkbox" checked aria-label="Show gt30e060n40"><svg><use href="#ras"/></svg><strong>gt30e060n40</strong></li>
      <li class="f c"><b class="g"></b><b class="cl c1"></b>1</li>
      <li class="f c"><b class="g"></b><b class="cl c2"></b>243</li>
      <li class="f c"><b class="g"></b><b class="cl c3"></b>875</li>
      <li class="f c"><b class="g"></b><b class="cl c4"></b>3560</li>
      <li class="f c"><b class="g end"></b><b class="cl c5"></b>7797</li>
    </ul>
  </section>
  <div class="vsplit"></div>

  <section class="canvas">
    <svg viewBox="411 136 932 857" role="img" aria-label="Elevation map with state boundaries">
      <defs>
        <clipPath id="frame"><path d="M32 30H1524V2250H32z"/></clipPath>
        <clipPath id="land"><path d="M0 0H1560V1735L1524 1730 1505 1695 1490 1650 1478 1665 1462 1660 1472 1600 1468 1540 1478 1455 1455 1385 1445 1315 1435 1255 1410 1215 1400 1260 1378 1280 1355 1297 1325 1290 1312 1275 1315 1230 1322 1210 1310 1155 1290 1125 1275 1095 1245 1065 1228 1025 1218 975 1205 955 1180 975 1160 1000 1140 995 1115 1018 1080 1020 1060 1012 1035 1028 1040 1060 1015 1095 960 1135 930 1175 900 1210 865 1235 860 1265 828 1270 815 1297 800 1293 785 1310 782 1345 783 1375 790 1405 787 1435 775 1475 770 1515 772 1555 752 1558 740 1600 712 1615 705 1645 685 1657 665 1645 642 1595 632 1545 610 1485 585 1435 575 1385 560 1345 540 1290 528 1235 518 1170 506 1100 512 1085 510 1050 500 990 492 985 490 1010 480 1040 437 1060 415 1045 390 1008 368 985 370 972 408 965 422 945 390 955 370 945 352 925 342 900 315 900 305 880 285 852 275 820 262 822 200 835 140 828 80 832 0 825zM778 1575 800 1585 825 1640 845 1685 845 1720 830 1740 797 1757 780 1745 772 1700 768 1650 785 1610zM1345 1765 1370 1785 1430 1790 1455 1825 1475 1850 1530 1890V2045L1500 2000 1480 1945 1440 1915 1420 1870 1380 1840 1352 1800zM1365 1895 1390 1915 1375 1912zM1415 1955 1440 1975 1442 1998 1420 1975zM1472 2070 1485 2080 1495 2108 1475 2095zM1462 2020 1480 2022 1464 2050zM1508 2122 1524 2145 1512 2130z"/></clipPath>
        <filter id="terrain" filterUnits="userSpaceOnUse" x="0" y="0" width="1560" height="2250" color-interpolation-filters="sRGB">
          <feTurbulence type="fractalNoise" baseFrequency=".012 .016" numOctaves="6" seed="7" result="n"/>
          <feDisplacementMap in="SourceGraphic" in2="n" scale="80" xChannelSelector="R" yChannelSelector="G" result="d"/>
          <feTurbulence type="turbulence" baseFrequency=".022 .045" numOctaves="5" seed="12"/>
          <feColorMatrix values="1 0 0 0 0 1 0 0 0 0 1 0 0 0 0 0 0 0 0 1" result="m"/>
          <feComposite in="d" in2="m" operator="arithmetic" k1=".34" k2=".9" k3="0" k4="0"/>
          <feComponentTransfer><feFuncR type="table" tableValues=".843 .992 1 .671 .169"/><feFuncG type="table" tableValues=".098 .682 1 .867 .514"/><feFuncB type="table" tableValues=".11 .38 .749 .643 .729"/><feFuncA type="linear" slope="0" intercept="1"/></feComponentTransfer>
        </filter>
        <filter id="soft" filterUnits="userSpaceOnUse" x="-60" y="-60" width="1700" height="2400"><feGaussianBlur stdDeviation="11"/></filter>
        <filter id="rough" filterUnits="userSpaceOnUse" x="0" y="0" width="1560" height="2250"><feTurbulence type="fractalNoise" baseFrequency=".12" numOctaves="2" seed="3"/><feDisplacementMap in="SourceGraphic" scale="8" xChannelSelector="R" yChannelSelector="G"/></filter>
      </defs>
      <g transform="translate(560 145) scale(.40816 .33333)" clip-path="url(#frame)">
        <g filter="url(#rough)">
          <g clip-path="url(#land)"><g filter="url(#terrain)"><g filter="url(#soft)">
            <path d="M-60-60H1640V2300H-60z" fill="#909090"/>
            <path d="M-60-60H290L270 110 380 180 350 235 200 245 150 295 70 285 50 235-60 215z" fill="#343434"/>
            <path d="M-60 20H140L170 110 50 200-60 190z" fill="#1c1c1c"/>
            <path d="M-60 240 60 260 100 340 60 600 120 720 280 740 270 860-60 860z" fill="#7c7c7c"/>
            <path d="M60 450 140 470 195 560 110 620 65 590zM110 660 240 650 210 715 160 710zM30 700 60 740 30 760z" fill="#484848"/>
            <path d="M100 310 250 260 420 230 400 420 330 560 200 560 160 420z" fill="#a0a0a0"/>
            <path d="M230 560 300 560 300 740 240 740z" fill="#8c8c8c"/>
            <path d="M300 60 420 0H600L640 120 830 270 1010 180 1120 100 1300 60 1600 90V700L1430 690 1380 600 1210 700 1080 730 940 660 800 560 640 430 520 300 380 300z" fill="#c0c0c0"/>
            <path d="M580 150 640 130 830 270 1010 180 1200 200 1440 270 1600 300V560H1400L1200 640 1080 690 900 600 780 480 640 330z" fill="#d0d0d0"/>
            <path d="M880 280H1300L1450 460 1200 600 900 560z" fill="#d3d3d3"/>
            <path d="M590-60H1220L1080 90 1010 175 900 220 830 245 760 220 670 190 630 100z" fill="#7f7f7f"/>
            <path d="M1060-20H1210L1090 90z" fill="#606060"/><path d="M1440-20H1600V90z" fill="#868686"/>
            <path d="M1180 90 1290 80 1350 160 1450 190V260L1350 250 1240 190z" fill="#a4a4a4"/>
            <path d="M535 330 620 430 600 450 540 420zM640 450 700 540 790 610 930 690 1080 740 1250 700 1240 735 1080 775 930 730 780 655 690 590 600 480z" fill="#828282"/>
            <path d="M1390 600 1600 560V2000L1480 1640 1390 1250 1300 1080 1240 900 1380 740z" fill="#7e7e7e"/>
            <path d="M1430 500 1600 460V900L1450 920z" fill="#a4a4a4"/>
            <path d="M420 500 480 440 540 425 610 470 690 590 780 660 930 740 900 870 740 850 640 1000 340 1000 310 880 305 630 335 600 350 650 400 650z" fill="#1d1d1d"/>
            <path d="M455 350 500 355 510 400 440 460 420 450z" fill="#363636"/>
            <path d="M560 480 610 470 680 570 690 690 600 620 550 590z" fill="#303030"/>
            <path d="M690 600 780 655 860 710 850 860 740 850 690 740z" fill="#1d1d1d"/>
            <path d="M300 620 340 650 400 760 430 920 345 910 250 860 270 800 300 880z" fill="#040404"/>
            <path d="M400 640 530 600 430 700 390 740 410 830 380 830z" fill="#101010"/>
            <path d="M860 700 930 735 1080 785 1150 775 1290 750 1375 700 1380 725 1250 810 1240 1030 1050 1030 1080 880 900 880 850 850z" fill="#101010"/>
            <path d="M1075 790 1160 770 1240 880 1230 1030H1050L1035 950z" fill="#000"/>
            <path d="M1150 755 1290 740 1370 705" fill="none" stroke="#0c0c0c" stroke-width="34"/>
            <path d="M1150 800 1240 810 1245 835 1150 832zM1250 770 1290 765 1290 790 1260 800z" fill="#707070"/>
            <path d="M430 760 550 600 680 700 690 800 740 820 900 865 1040 880 1050 1010 930 1180 800 1290 790 1550 690 1680 600 1460 500 1100 560 1000 540 900 440 860z" fill="#404040"/>
            <path d="M340 900 440 880 530 890 560 1000 510 1100 420 1080 350 990z" fill="#0c0c0c"/>
            <path d="M380 900 430 905 450 930 380 930zM410 990 450 985 460 1020 420 1015z" fill="#2c2c2c"/>
            <path d="M515 790 620 730 590 860 540 850z" fill="#4c4c4c"/>
            <path d="M650 900 860 880 900 1020 600 1000z" fill="#4c4c4c"/>
            <path d="M910 880 1040 890 1010 950 940 950z" fill="#505050"/>
            <path d="M900 1040 1000 1000 1000 1080 900 1180 860 1160z" fill="#5c5c5c"/>
            <path d="M870 1170 900 1120 910 1150 850 1210z" fill="#707070"/>
            <path d="M540 1120 640 1080 690 1120 640 1220 570 1260z" fill="#5c5c5c"/>
            <path d="M560 1270 680 1190 690 1290 660 1400 720 1430 640 1490 590 1430z" fill="#626262"/>
            <path d="M600 1390 700 1390 720 1430 640 1490 600 1450z" fill="#7c7c7c"/>
            <path d="M690 1290 760 1290 760 1400 680 1380zM690 1470 760 1430 760 1500 690 1500z" fill="#404040"/>
            <path d="M630 1490 680 1490 675 1640 660 1600z" fill="#6c6c6c"/>
            <path d="M1110 1030 1060 1020 1030 1060 955 1140 860 1260 800 1300 785 1320 795 1410 780 1480 775 1560 740 1600 700 1650" fill="none" stroke="#000" stroke-width="60"/>
            <path d="M870 1240 780 1250 700 1290" fill="none" stroke="#101010" stroke-width="30"/>
            <path d="M690 1655 650 1620 620 1520 570 1400 530 1260 510 1130" fill="none" stroke="#060606" stroke-width="30"/>
            <path d="M512 1100 510 1000" stroke="#000" stroke-width="54"/>
            <path d="M-20 846H260L310 910" fill="none" stroke="#000" stroke-width="84"/>
            <path d="M1270 800 1320 780 1430 700 1430 900 1400 940 1410 1260 1340 1300 1300 1100 1240 1040 1230 900z" fill="#3a3a3a"/>
            <path d="M1215 960 1250 1060 1320 1170 1350 1260 1395 1260 1390 1150" fill="none" stroke="#000" stroke-width="46"/>
            <path d="M1310 1280 1330 1200 1400 1200 1400 1300z" fill="#000"/>
            <path d="M1340 830 1330 950 1350 1100 1380 1180" fill="none" stroke="#080808" stroke-width="26"/>
            <path d="M1380 760 1400 860 1420 930" fill="none" stroke="#101010" stroke-width="22"/>
            <path d="M1285 900 1290 1000 1310 1080" fill="none" stroke="#888" stroke-width="20"/>
            <path d="M1415 1240 1455 1330 1480 1500 1475 1640" fill="none" stroke="#080808" stroke-width="40"/>
            <path d="M1530 1230 1500 1400 1510 1500 1490 1680" fill="none" stroke="#0c0c0c" stroke-width="30"/>
            <path d="M1430 1160 1490 1380" fill="none" stroke="#484848" stroke-width="26"/>
            <path d="M1480 1580h90v220h-90z" fill="#101010"/>
            <path d="M740 1560h130v220H740z" fill="#080808"/><path d="M790 1690 815 1680 820 1720 795 1730z" fill="#888"/>
            <path d="M1330 1740H1540V2140H1330z" fill="#121212"/>
            <path d="M1370 1795 1420 1810 1470 1890 1520 1960 1530 2000 1480 1920 1420 1860z" fill="#a0a0a0" stroke="#777" stroke-width="14"/>
          </g></g></g>
        </g>
        <g class="borders">
          <path d="M500 255 503 243 511 236 515 226 524 221 535 222 548 222 553 212 570 208 575 203 588 208 602 206 607 218 620 232 625 240 640 245 655 258 660 275 673 279 685 292 698 291 715 282 733 276 738 269 752 266 765 271 775 273 790 288 789 305 780 340 765 350 766 362 758 372 740 375 745 387 740 402 745 410 758 417 755 430 762 432 750 460 735 462 722 452 712 448 708 438 700 432 680 432 668 424 655 420 643 426 625 434 622 445 622 460 605 467 590 462 580 455 575 441 560 438 545 428 541 395 535 350 550 335 550 322 557 315 548 290 535 290 525 285 530 275 522 270 500 268z"/>
          <path d="M622 460 628 476 640 490 640 500 650 520 665 545 675 555 690 570 692 545 695 530 715 524 728 526 740 518 730 500 732 480 722 452M605 467 592 480 575 490 572 510 578 530 565 550 552 570 550 588 565 588 575 592 590 602 605 605 615 598 635 600 650 585 662 565 665 545M740 518 752 530 765 535 780 545 795 560 815 577 800 590 795 600 793 625 785 635 782 655 765 647 740 625 725 620 718 605 700 602 692 600 695 585 690 570"/>
          <path d="M550 588 530 595 525 620 515 645 497 655 490 665 488 685 475 698 450 700 430 708 425 695 415 695 402 720 388 740 392 765 412 768 408 795 420 812 432 825 435 845 443 865M575 592 575 608 592 613 592 625 610 630 613 660 622 670 625 680 632 700 645 688 655 690 668 685 668 702 680 705M690 570 678 582 672 600 672 625 675 645 685 670 685 700 678 715 690 735 685 745 715 755M662 655 668 648 675 652 680 668 668 672z"/>
          <path d="M782 655 800 662 815 678 830 682 860 705 880 710 890 718 910 720 925 722 935 745 925 770 937 782 935 795 950 805 930 818 910 840 903 855 905 870M715 755 700 765 690 775 665 790 650 800 650 820 655 825 670 835 680 830 680 840 662 843 668 860 665 885 650 880 635 892 625 890 620 905 610 900 612 890 625 895 628 875 618 865 622 850 605 850 600 858 595 848 585 855 592 870 585 900 585 920 575 940"/>
          <path d="M715 755 740 765 745 775 742 800 733 808 738 820 740 840 755 832 765 843 780 838 790 830 797 845 815 842 825 850 840 845 842 858 862 862 880 870 882 900 895 902 905 890V870M730 820 716 835 720 848 710 855 718 880 735 885 740 875 735 860 732 835M925 722 937 732 945 730 950 745 965 745 968 755 985 753 990 763 1010 765 1020 772 1040 770 1050 777 1080 775 1070 785 1085 800 1070 810 1065 825 1080 840 1075 850 1068 832 1055 840 1050 858 1035 870 1030 862 1010 868 990 868 970 875 965 870 945 882 920 880 905 870"/>
          <path d="M905 890 920 905 925 925 940 945 930 960 935 975 950 978 965 980 968 990 990 995 997 990 1000 972 1012 968 1018 978 1030 975 1038 992 1060 1012M1075 850 1068 862 1070 890 1055 892 1045 905 1025 912 1010 930 995 935 1000 945 1030 950 1028 965 1040 990M1085 775 1095 790 1085 805 1110 820 1110 835 1090 835 1080 850 1105 885 1103 920 1112 940 1105 965 1112 1015M1080 775 1084 740 1077 710 1090 695 1105 690 1110 740 1088 742M1110 740 1118 752 1145 760 1145 775 1140 797 1120 785 1085 775"/>
          <path d="M1145 760 1180 755 1230 750 1260 742 1290 745 1310 722 1330 708 1350 705 1360 697 1372 700 1375 725 1362 738 1345 745 1340 765 1318 780 1305 795 1290 805 1280 825 1262 845 1262 870 1250 880 1240 885 1238 850 1254 838 1248 822 1230 815 1235 800 1220 798 1205 808 1190 800 1155 800 1145 795V830L1165 832 1200 838 1250 838M1230 750 1225 720 1210 720 1210 703 1220 708 1250 702 1250 690 1275 680 1280 662 1300 650 1310 635 1328 625 1335 637 1350 640 1365 625 1380 620 1390 632 1388 645 1400 660 1395 675 1418 678 1425 692 1410 712 1415 738 1405 728 1385 730 1365 745 1345 765"/>
          <path d="M1345 765 1340 790 1328 820 1310 825 1290 822 1275 835 1275 860 1262 875 1265 890 1308 902 1315 875 1328 850 1325 820M1265 890 1278 898 1275 935 1268 950 1270 990 1258 998 1250 985 1248 965 1238 940 1237 915 1243 890 1258 875M1235 885 1228 875 1222 890 1205 885 1210 897 1195 905 1200 935 1212 948 1222 930 1218 915 1235 910z"/>
          <path d="M345 905 362 885 380 887 400 885 415 885 420 878 440 883 443 865 475 865 490 875 510 880 525 875 532 890 548 915 565 935 575 940 572 955 560 963 568 975 560 990 560 1010 550 1012 552 1040 545 1050 552 1065 532 1070 532 1085 515 1090M560 1010 575 1012 600 1025 622 1025 640 1040 648 1022 665 1020 670 1008 682 1012 690 1025 710 1022 725 1025 740 1020 760 1020 775 1015 800 1020 803 1030M882 900 860 903 840 905 840 918 857 935 845 950 838 965 820 970 815 990 805 1000 800 1025 795 1060 803 1080 795 1105 808 1112 808 1128 795 1128 790 1150 800 1165 812 1175 830 1200"/>
          <path d="M935 975 918 980 915 1005 905 1022 900 1038 885 1035 870 1050 865 1075 868 1095 878 1100 865 1103 860 1092 850 1095 850 1110 858 1140 842 1160 835 1200M560 1300 568 1290 562 1268 575 1258 590 1245 615 1235 615 1220 645 1222 650 1205 665 1195 672 1178 685 1165 695 1150 695 1130 712 1120 715 1102 735 1110 745 1120 775 1115 775 1135 785 1160 795 1165M685 1165 690 1180 683 1200 690 1230 680 1260 685 1290 665 1292 690 1290 710 1295 735 1285 750 1275 755 1262 795 1250 800 1240 820 1230 835 1220 835 1200 855 1190 868 1168 880 1175 890 1160 905 1152 912 1138 925 1140 935 1155 945 1148 955 1150"/>
          <path d="M665 1292 672 1305 668 1325 660 1330 660 1350 668 1372 665 1390 685 1385 705 1390 710 1402 725 1425 718 1440 705 1432 690 1440 685 1458 692 1475 685 1492 665 1485 640 1492 620 1475 610 1465 590 1440M725 1430 740 1425 755 1420 765 1410 790 1405M640 1492 655 1510 662 1550 675 1580 670 1610 675 1650M545 1300 565 1305 558 1345M668 1368h14v18h-14z"/>
          <path d="M345 905 352 925 370 945 390 955 405 945 422 945 408 965 390 960 370 972 368 985 390 1008 415 1045 437 1060 480 1040 490 1010 492 985 500 990 510 1050 512 1085 506 1100 510 1140 518 1170 528 1235 540 1290 560 1345 575 1385 585 1435 610 1485 632 1545 642 1595 665 1645 685 1657 705 1645 712 1615 740 1600 760 1607M740 1600 752 1558 772 1555 770 1515 775 1475 787 1435 790 1405 783 1375 782 1345 785 1310 800 1293 815 1297 828 1270 860 1265 865 1235 900 1210 930 1175 960 1135 1015 1095 1040 1060 1035 1028 1060 1012 1080 1020 1115 1018"/>
          <path class="solid" d="M338 900 355 895 352 925zM1075 985 1095 995 1105 965 1115 975V1018L1078 1016zM765 1472h8v12h-8z"/>
          <path class="isl" d="M1260 1396 1258 1440 1256 1480 1252 1502M1262 1460 1264 1480M1243 1534V1542M1285 1652 1280 1664M1286 1684 1293 1712"/>
          <path class="dots" d="M476 1458v5M472 1480v2M486 1495v2M482 1512v2M488 1528v2M508 1510v3M516 1498v1M503 1542v1M490 1564v2M542 1530v1M556 1508v3M540 1562v3M518 1646v2M1309 1407v1M1294 1462v1M1233 1495v2M1254 1605v3M1266 1642v5M1286 1635v5"/>
          <path class="reds" d="M518 1723v2M530 1762v2M533 2011v2"/>
        </g>
      </g>
      <path d="M746 922.500h1M761 932.500h1" stroke="#c22"/>
    </svg>
  </section>
  <div class="vsplit"></div>

  <section class="rdock">
    <div class="dtitle"><i></i><h2>Layer Styling</h2><i></i><button aria-label="Float"><svg><use href="#dock"/></svg></button><button aria-label="Close"><svg><use href="#x"/></svg></button></div>
    <div class="styling">
      <div class="sel tall ic layer"><svg><use href="#poly"/></svg><select aria-label="Layer"><option>Admin2</option></select></div>
      <div class="tabs">
        <button class="cur" aria-label="Symbology"><svg><use href="#bigbrush"/></svg></button>
        <div class="dark">
          <button aria-label="Labels"><svg><use href="#abc"/></svg></button>
          <button aria-label="Style manager"><svg><use href="#brushes"/></svg></button>
          <button aria-label="History"><svg><use href="#hist"/></svg></button>
        </div>
      </div>
      <div class="panel">
        <div class="sel tall ic"><svg><use href="#single"/></svg><select aria-label="Renderer"><option>Single symbol</option></select></div>
        <div class="scroll">
          <div class="content">
            <div class="symrow">
              <ul class="tree t3">
                <li class="f"><b class="g end"><b class="ex"></b></b><b class="sw k"></b><strong>Fill</strong></li>
                <li class="f sel"><b class="g end"></b><b class="sw"></b>Simple fill</li>
              </ul>
              <div class="preview"></div>
            </div>
            <div class="btnrow">
              <button class="sq l" aria-label="Add"><svg><use href="#bigplus"/></svg></button><button class="sq" aria-label="Remove"><svg><use href="#bigminus"/></svg></button><button class="sq l" aria-label="Lock"><svg><use href="#unlock"/></svg></button><button class="sq l" aria-label="Duplicate"><svg><use href="#dup"/></svg></button><button class="sq" aria-label="Up"><svg><use href="#up"/></svg></button><button class="sq" aria-label="Down"><svg><use href="#down"/></svg></button>
            </div>
            <div class="typerow"><label for="slt">Symbol layer type</label><div class="sel"><select id="slt"><option>Simple fill</option></select></div></div>
            <div class="props">
              <span>Fill</span><div class="clr"><button aria-label="Fill colour"><b class="blue"></b></button><button class="dn" aria-label="Fill colour menu"><svg class="ar"><use href="#tri"/></svg></button></div><button class="ddb" aria-label="Data defined fill"><svg><use href="#dd"/></svg></button>
              <span>Outline</span><div class="clr"><button aria-label="Outline colour"><b></b></button><button class="dn" aria-label="Outline colour menu"><svg class="ar"><use href="#tri"/></svg></button></div><button class="ddb" aria-label="Data defined outline"><svg><use href="#dd"/></svg></button>
              <label for="fs">Fill style</label><div class="sel in"><select id="fs"><option>No Brush</option></select></div><button class="ddb" aria-label="Data defined fill style"><svg><use href="#dd"/></svg></button>
              <label for="os">Outline style</label><div class="sel in"><b class="ln"></b><select id="os"><option>Solid Line</option></select></div><button class="ddb" aria-label="Data defined outline style"><svg><use href="#dd"/></svg></button>
              <label for="js">Join style</label><div class="sel mid"><svg><use href="#bevel"/></svg><select id="js"><option>Bevel</option></select></div><button class="ddb" aria-label="Data defined join style"><svg><use href="#dd"/></svg></button>
              <label for="ow">Outline width</label><div class="wid"><div class="spin focus"><input id="ow" value="0.40000"><i class="caret"></i><svg class="clear" viewBox="0 0 14 12"><path d="m0 6 4-6h10v12H4z" fill="#aaa"/><path d="m6 3 5 6M11 3 6 9" stroke="#fff" stroke-width="1.300"/></svg><span class="ud"><button aria-label="Up"><svg><use href="#triup"/></svg></button><button aria-label="Down"><svg><use href="#tri"/></svg></button></span></div><div class="sel unit"><select aria-label="Unit"><option>Millimeter</option></select></div></div><button class="ddb" aria-label="Data defined width"><svg><use href="#dd"/></svg></button>
              <span></span><div class="wid"><div class="spin"><input aria-label="Offset"><span class="ud"><button aria-label="Up"><svg><use href="#triup"/></svg></button><button aria-label="Down"><svg><use href="#tri"/></svg></button></span></div><div class="sel unit"><select aria-label="Offset unit"><option></option></select></div></div><span></span>
            </div>
          </div>
          <div class="sb"><button aria-label="Up"><svg><use href="#triup"/></svg></button><b class="thumb"></b><i></i><button aria-label="Up"><svg><use href="#triup"/></svg></button><button aria-label="Down"><svg><use href="#tri"/></svg></button></div>
        </div>
        <h3><svg class="ar"><use href="#tri"/></svg>Layer rendering<i></i></h3>
        <div class="rend">
          <label for="lt">Layer transparency</label><div class="trans"><input id="lt" type="range" value="0"><div class="spin num"><input value="0" aria-label="Transparency"><span class="ud"><button aria-label="Up"><svg><use href="#triup"/></svg></button><button aria-label="Down"><svg><use href="#tri"/></svg></button></span></div></div>
          <label for="lb">Layer blending mode</label><div class="sel blend"><select id="lb"><option>Normal</option></select></div>
          <label for="fb">Feature blending mode</label><div class="sel blend"><select id="fb"><option>Normal</option></select></div>
        </div>
        <div class="chk"><label><input type="checkbox">Draw effects</label><button class="sq s" aria-label="Effects"><svg><use href="#fx"/></svg></button></div>
        <div class="chk"><label><input type="checkbox">Control feature rendering order</label><button class="sq s" aria-label="Order"><svg><use href="#az"/></svg></button></div>
        <div class="foot"><button class="sq s" aria-label="Undo"><svg><use href="#undo"/></svg></button><button class="sq s" aria-label="Redo"><svg><use href="#redo"/></svg></button><label><input type="checkbox" checked>Live update</label><button class="apply">Apply</button></div>
      </div>
    </div>
    <div class="split"><i></i></div>
    <div class="dtitle"><i></i><h2>Processing Toolbox</h2><i></i><button aria-label="Float"><svg><use href="#dock"/></svg></button><button aria-label="Close"><svg><use href="#x"/></svg></button></div>
    <input class="search" placeholder="Search..." aria-label="Search">
    <div class="ptree">
      <ul class="tree t4">
        <li class="f18"><b class="g"><b class="ex"></b></b>Recently used algorithms</li>
        <li class="kid"><b class="g v"></b><b class="g end"></b><svg><use href="#saga"/></svg>Catchment area</li>
        <li><b class="g"><b class="ex p"></b></b><svg><use href="#gdal"/></svg>GDAL/OGR [48 geoalgorithms]</li>
        <li><b class="g"><b class="ex p"></b></b><svg><use href="#grass"/></svg>GRASS GIS 7 commands [314 geoalgorithms]</li>
        <li class="f18"><b class="g"><b class="ex p"></b></b><svg><use href="#model"/></svg>Models [0 geoalgorithms]</li>
      </ul>
      <div class="sb"><button aria-label="Up"><svg><use href="#triup"/></svg></button><b class="thumb"></b><i></i><button aria-label="Up"><svg><use href="#triup"/></svg></button><button aria-label="Down"><svg><use href="#tri"/></svg></button></div>
    </div>
  </section>
</main>

<footer class="status">
  <span class="msg">1 legend entries removed.</span>
  <label for="co">Coordinate</label><input id="co" class="coord" value="12084174,1569930">
  <svg class="i22"><use href="#mouse"/></svg>
  <label for="sc" class="gap">Scale</label><div class="sel scale"><select id="sc"><option>1:34,561,744</option></select></div>
  <svg class="lock"><use href="#lock"/></svg>
  <label for="mg" class="gap3">Magnifier</label><div class="spin"><input id="mg" value="100%"><span class="ud"><button aria-label="Up"><svg><use href="#triup"/></svg></button><button aria-label="Down"><svg><use href="#tri"/></svg></button></span></div>
  <label for="ro" class="gap2">Rotation</label><div class="spin rot"><input id="ro" value="0.0"><span class="ud"><button aria-label="Up"><svg><use href="#triup"/></svg></button><button aria-label="Down"><svg><use href="#tri"/></svg></button></span></div>
  <label class="render"><input type="checkbox" checked>Render</label>
  <button class="epsg"><svg><use href="#crs"/></svg>EPSG:3857 (OTF)</button>
  <svg class="bub"><use href="#bubble"/></svg>
</footer>

<div class="taskbar">
  <button class="start" aria-label="Start"><svg viewBox="0 0 20 20"><path d="M0 3l8-1.200V9.500H0zM9 1.600 20 0v9.500H9zM0 10.500h8v7.700L0 17zM9 10.500h11V20L9 18.400z" fill="#fff"/></svg></button>
  <label class="find"><svg viewBox="0 0 28 28"><circle cx="14" cy="14" r="11.500" fill="none" stroke="#111" stroke-width="3.500"/></svg><input placeholder="Type here to search"><svg class="mic" viewBox="0 0 16 22"><path d="M4.500 1h7v13h-7zM1 11v5h14v-5M8 16v4M5 21h6" fill="none" stroke="#222" stroke-width="1.500"/></svg></label>
  <button class="app tv" aria-label="Task view"><svg viewBox="0 0 24 24"><path d="M3.500 7.500h12v9h-12zM2.500 2v3h14V2M2.500 22v-3h14v3M20.500 2v20" fill="none" stroke="#fff" stroke-width="1.200"/><path d="M19 8h3v3h-3z" fill="#fff"/></svg></button>
  <button class="app" aria-label="R"><svg viewBox="0 0 28 28"><defs><linearGradient id="gOrb" x1="0" y1="0" x2="0" y2="1"><stop offset="0" stop-color="#1b4fd0"/><stop offset=".5" stop-color="#2f86ea"/><stop offset="1" stop-color="#8fe0ff"/></linearGradient></defs><circle cx="14" cy="14" r="13.500" fill="url(#gOrb)"/><text x="14.500" y="20" font-size="17" font-weight="bold" font-family="Liberation Serif" text-anchor="middle" fill="#fff">R</text></svg></button>
  <button class="app" aria-label="Terminal"><svg viewBox="0 0 28 28"><path d="M.5 3.500h27v21H.5z" fill="#050505" stroke="#888"/><path d="M1 4h26v3H1z" fill="#aaa"/><text x="3" y="13" font-size="5" fill="#ddd">C:\_</text></svg></button>
  <button class="app" aria-label="Notes"><svg viewBox="0 0 28 28"><path d="M3 3h22v12h-8v10H3z" fill="#fff"/><path d="M18 25h7V16z" fill="#fff"/><path d="M17 24v-8h8z" fill="#111"/></svg></button>
  <button class="app" aria-label="Word"><svg viewBox="0 0 28 28"><path d="M14 3h13v22H14z" fill="#fff" stroke="#2b579a"/><path d="M17 7h8M17 10h8M17 13h8M17 16h8M17 19h8M17 22h8" stroke="#2b579a"/><path d="m0 3 16-3v28L0 25z" fill="#2b579a"/><text x="8" y="19" font-size="13" font-weight="bold" text-anchor="middle" fill="#fff">W</text></svg></button>
  <button class="app" aria-label="PyCharm"><svg viewBox="0 0 28 28"><path d="M0 0h28v28H0z" fill="#21d789"/><path d="M18 0h10v14z" fill="#fcf84a"/><path d="M0 0h8v14H0z" fill="#07c3f2"/><path d="M4 4h20v20H4z"/><text x="5.500" y="14.500" font-size="11" font-weight="bold" fill="#fff">PC</text><path d="M6 21h8" stroke="#fff" stroke-width="1.500"/></svg></button>
  <button class="app" aria-label="Firefox"><svg viewBox="0 0 28 28"><circle cx="14" cy="15" r="12.500" fill="#ff7a1a"/><path d="M20 2c6 4 8 9 6 16-3 9-14 11-20 6 8 2 14-2 15-8 1-5-3-8-1-14z" fill="#ffc82a"/><circle cx="13" cy="14" r="6.500" fill="#2a3fb0"/><path d="M2 8c1-2 2-4 4-5 0 3 3 4 6 4-2 2 0 3 2 4-3 2-6 2-6 5-3-2-7-3-6-8z" fill="#ff5722"/></svg></button>
  <button class="task w1"><svg viewBox="0 0 28 28"><path d="M4 1h15l1 5v20H4z" fill="#ffe08a"/><path d="M16 8h5v18h-5z" fill="#e0ad3e"/><path d="M4 1h5v25l-5 1z" fill="#f6cf6a"/></svg>Screenshots</button>
  <button class="task w2"><svg viewBox="0 0 28 28"><circle cx="14" cy="14" r="13.500" fill="#fbc116"/><path d="M14 .5A13.500 13.500 0 0 0 2.300 7.300L8.500 17 14 8h12A13.500 13.500 0 0 0 14 .5z" fill="#de4b3e"/><path d="M2.300 7.300A13.500 13.500 0 0 0 13 27.500L19 17 9 17z" fill="#1aa260"/><circle cx="14" cy="14" r="6.500" fill="#fff"/><circle cx="14" cy="14" r="5" fill="#4a8af4"/></svg>Editing craigdsouza...</button>
  <button class="task w3 act"><svg viewBox="0 0 24 24"><use href="#logo"/></svg>QGIS 2.18.20 - ken-r...</button>
  <div class="tray">
    <svg class="ppl" viewBox="0 0 20 20"><g fill="none" stroke="#fff" stroke-width="1.500"><circle cx="6" cy="9" r="3"/><path d="M1 19c0-8 10-8 10 0"/><circle cx="14" cy="4" r="3"/><path d="M11 10c3-3 8-1 8 4"/></g></svg>
    <svg class="up" viewBox="0 0 18 12"><path d="m1 11 8-9 8 9" fill="none" stroke="#fff" stroke-width="1.500"/></svg>
    <svg viewBox="0 0 22 16"><path d="M4 15C-1 15 0 8 4 9c0-4 5-6 8-3 3-1 5 1 5 3 5 0 5 6 1 6z" fill="#fff"/><path d="M1 10C1 3 6 0 11 3" stroke="#fff" fill="none" stroke-width="1.500"/></svg>
    <svg viewBox="0 0 22 16"><path d="M6 4.500h14v9H6zM21 7v4" fill="none" stroke="#fff" stroke-width="1.500"/><path d="M8 6.500h4v5H8z" fill="#fff"/><path d="M0 3h5v3l-2 2v5M1.500 0v3M4 0v3" fill="none" stroke="#fff"/></svg>
    <svg viewBox="0 0 20 20"><g fill="none" stroke="#ccc" stroke-width="1.300"><path d="M3 18C3 9 9 4 17 3M7 18c0-6 4-10 10-11M11 18c0-4 2-6 6-7"/></g><circle cx="15" cy="17" r="1.800" fill="#fff"/></svg>
    <svg viewBox="0 0 22 18"><path d="M1 6.500h3L8 3v13l-4-4H1z" fill="none" stroke="#fff" stroke-width="1.300"/><path d="M11 6c2 2 2 5 0 7" stroke="#fff" fill="none"/><path d="M14 4c3 3 3 8 0 11M17 2c4 4 4 11 0 15" stroke="#888" fill="none"/></svg>
    <div class="clock"><span>22:20</span><span>20-06-2018</span></div>
    <svg class="note" viewBox="0 0 32 34"><path d="M0 2h21v15h-8l-5 5v-5H0z" fill="#fff"/><path d="M4 6h13M4 9h13M4 12h13" stroke="#222"/><circle cx="21" cy="22" r="10" fill="#333" stroke="#888"/><text x="21" y="27" font-size="14" text-anchor="middle" fill="#fff">4</text></svg>
  </div>
</div>
</body>
</html>
```
FILE: styles.css
```
*{box-sizing:border-box}
body{margin:0;height:100vh;display:flex;flex-direction:column;overflow:hidden;background:#efefef;color:#000;font:13px/16px "DejaVu Sans Condensed","DejaVu Sans",sans-serif}
button,input,select{font:inherit;color:inherit;margin:0}
button{padding:0;border:0;background:none;display:flex;align-items:center;justify-content:center}
h1,h2,h3,ul{margin:0;padding:0;font-size:13px;font-weight:normal}
ul{list-style:none}
svg{flex:none;display:block}
.sprite{display:none}
.i22{width:22px;height:22px}
.ar{width:10px;height:6px}

.titlebar{display:flex;align-items:center;height:30px;flex:none;background:#fff;padding:0 4px 0 1px}
.titlebar h1{font:14px/20px "Open Sans",sans-serif;margin-left:4px;flex:1}
.winbtns{display:flex}
.winbtns button{width:58px;height:30px}
.winbtns svg{width:12px;height:12px}
.menubar{display:flex;align-items:center;flex:none;height:25px;padding:1px 0 0 10px;gap:14px;border-bottom:1px solid #b4b4b4}
.menubar a{color:inherit;text-decoration:none}
.toolbar{display:flex;align-items:center;flex:none;height:39px;border-bottom:1px solid #b4b4b4}
.toolbar .grip{width:12px;height:28px;flex:none;background:url("data:image/svg+xml,%3Csvg xmlns='http://www.w3.org/2000/svg' width='6' height='6'%3E%3Cpath d='M0 1h2v2H0zM3 4h2v2H3z' fill='%23c4c4c4'/%3E%3Cpath d='M1 2h2v2H1zM4 5h2v1H4z' fill='%23fff'/%3E%3C/svg%3E") 5px 0/6px 6px repeat-y}
.toolbar .grip:not(:first-child){width:14px;background-position-x:5px}
.toolbar button{width:35px;height:32px}
.toolbar button svg:first-child{width:24px;height:24px}
.toolbar button.m{width:50px;justify-content:flex-start;padding-left:5px}
.toolbar .m .ar{margin-left:6px}
.off .ar{fill:#999}
.on{background:linear-gradient(#d2d2d2,#e4e4e4);border:1px solid #8a8a8a;border-radius:3px}

.work{flex:1;min-height:0;display:flex;border-top:1px solid #b4b4b4}
.sidebar{width:55px;flex:none;border-right:2px solid #bdbdbd;padding:5px 3px;display:flex;flex-direction:column}
.hgrip,.dtitle i{height:6px;background:url("data:image/svg+xml,%3Csvg xmlns='http://www.w3.org/2000/svg' width='6' height='6'%3E%3Cpath d='M0 0h2v2H0zM3 3h2v2H3z' fill='%23c4c4c4'/%3E%3Cpath d='M1 1h2v2H1zM4 4h2v2H4z' fill='%23fff'/%3E%3C/svg%3E") 0 0/6px 6px repeat-x}
.sidebar button{height:34px;width:48px;justify-content:flex-start;padding-left:5px;position:relative}
.sidebar button svg:first-child{width:24px;height:24px}
.sidebar button svg.sm:first-child{width:20px;height:20px;margin-right:4px}
.sidebar .bdg{position:absolute;left:20px;top:19px;width:10px;height:10px}
.sidebar .ar{margin-left:6px}
.sidebar .hgrip{flex:none;height:5px}
.sidebar .hgrip:last-child{margin-top:7px}

.ldock{width:348px;flex:none;display:flex;flex-direction:column;min-height:0;padding:2px 0 0 1px}
.dtitle{display:flex;align-items:center;flex:none;height:16px;gap:2px;padding:0 1px 0 2px}
.dtitle i{flex:1;margin:0 3px 0 0}
.dtitle h2{padding:2px 6px 0}
.dtitle button{width:15px;height:15px;border:1px solid #8c8c8c;border-radius:3px;background:#fafafa}
.dtitle button svg{width:12px;height:12px}
.ptools{display:flex;align-items:center;flex:none;height:35px;padding-left:2px}
.ptools button{width:27px;height:26px}
.ptools svg:first-child{width:17px;height:17px}
.ptools .m{width:44px;gap:6px}
.tree{background:#fff;border:2px solid #b9b9b9;border-radius:3px;overflow:hidden}
.t1{flex:455 0 0;min-height:0}
.t2{flex:292 0 0;min-height:0}
.tree li{display:flex;align-items:center;height:20px;white-space:nowrap}
.tree li.f{height:16px}
.tree li svg{width:20px;height:20px;margin-right:5px}
.tree li.f svg{width:13px;height:16px;margin:0 7px 0 2px}
.g{width:22px;height:100%;flex:none;display:flex;align-items:center;padding-left:4px;background:repeating-linear-gradient(#999 0 1px,transparent 1px 2px) 9px 0/1px 100% no-repeat,repeating-linear-gradient(90deg,#999 0 1px,transparent 1px 2px) 10px 50%/10px 1px no-repeat}
.g.end{background:repeating-linear-gradient(#999 0 1px,transparent 1px 2px) 9px 0/1px 50% no-repeat,repeating-linear-gradient(90deg,#999 0 1px,transparent 1px 2px) 10px 50%/10px 1px no-repeat}
.g.v{background-size:1px 100%,0 0}
.ex{width:10px;height:10px;border:1px solid #8a8a8a;border-radius:1px;background:linear-gradient(#555,#555) 1px 50%/6px 1px no-repeat,#fff}
.ex.p{background:linear-gradient(#555,#555) 1px 50%/6px 1px no-repeat,linear-gradient(#555,#555) 50% 1px/1px 6px no-repeat,#fff}
.tree li.sel{background:#efefef}
.sw{width:16px;height:16px;border:1px solid #123;flex:none;margin-right:6px}
.c .g{margin-left:20px}
.cl{width:16px;height:16px;margin-right:6px}
.c1{background:#d7191c}.c2{background:#fdae61}.c3{background:#ffffbf}.c4{background:#abdda4}.c5{background:#2b83ba}
.t2 input{margin:0 6px 0 0}
.split{height:10px;flex:none;display:flex;align-items:center;justify-content:center}
.split i{width:113px;height:3px;background:url("data:image/svg+xml,%3Csvg xmlns='http://www.w3.org/2000/svg' width='5' height='3'%3E%3Cpath d='M0 0h2v2H0z' fill='%23c8c8c8'/%3E%3Cpath d='M1 1h2v2H1z' fill='%23fff'/%3E%3C/svg%3E") 0 0/5px 3px repeat-x}
.vsplit{width:6px;flex:none;align-self:center;height:282px;background:url("data:image/svg+xml,%3Csvg xmlns='http://www.w3.org/2000/svg' width='3' height='5'%3E%3Cpath d='M0 0h2v2H0z' fill='%23c8c8c8'/%3E%3Cpath d='M1 1h2v2H1z' fill='%23fff'/%3E%3C/svg%3E") 2px 0/3px 5px repeat-y}

.canvas{flex:1;min-width:0;min-height:0;background:#fff;border:2px solid #bdbdbd;border-radius:3px;display:flex}
.canvas svg{flex:1;min-width:0;height:100%}
.borders path{fill:none;stroke:#000;stroke-width:2px;vector-effect:non-scaling-stroke;stroke-linejoin:round}
.borders .solid{fill:#000}
.borders .isl{stroke-width:4px;stroke-linecap:round}
.borders .dots{stroke-width:3px;stroke-linecap:round}
.borders .reds{stroke:#c22;stroke-width:1px}

.rdock{width:568px;flex:none;display:flex;flex-direction:column;min-height:0;padding:2px 1px 0 1px}
.rdock .dtitle{padding-left:4px}
.styling{display:grid;grid-template-columns:38px 1fr;column-gap:3px;padding:6px 2px 0 2px;flex:none}
.styling .layer{grid-column:1/3;margin-bottom:6px}
input[type=checkbox]{appearance:none;width:16px;height:16px;flex:none;border:1px solid #b4b4b4;border-radius:2px;background:#fcfcfc}
input[type=checkbox]:checked{background:url("data:image/svg+xml,%3Csvg xmlns='http://www.w3.org/2000/svg' viewBox='0 0 14 14'%3E%3Cpath d='m2.500 2.500 9 9M11.500 2.500l-9 9' stroke='%23000' stroke-width='3'/%3E%3C/svg%3E") #fcfcfc}
div.sel{position:relative}
div.sel select{appearance:none;display:block;width:100%;height:22px;border:2px solid #bababa;border-radius:3px;padding:0 18px 0 4px;background:url("data:image/svg+xml,%3Csvg xmlns='http://www.w3.org/2000/svg' width='16' height='20'%3E%3Cpath d='M.5 0v20' stroke='%23bababa'/%3E%3Cpath d='M5 8h7l-3.500 4z'/%3E%3C/svg%3E") right center no-repeat,linear-gradient(#fafafa,#dedede)}
div.tall select{height:26px}
div.mid select{height:26px;padding-left:27px}
div.sel>svg{position:absolute;pointer-events:none}
div.layer>svg{left:6px;top:5px;width:20px;height:16px}
div.layer select{padding-left:27px}
.panel .ic>svg{left:9px;top:5px;width:14px;height:16px}
.panel .ic select{padding-left:27px}
.mid>svg{left:7px;top:7px;width:18px;height:14px}
.in select{padding-left:39px!important}
.in .ln{position:absolute;left:7px;top:10px;width:30px;height:2px;background:#000}
.tabs{display:flex;flex-direction:column}
.tabs button{width:38px}
.tabs .cur{height:38px}
.tabs .cur svg{width:30px;height:26px}
.dark{flex:1;background:#5c5c5c;padding-top:1px}
.dark button{height:37px}
.dark svg{width:30px;height:30px}
.dark button:nth-child(3) svg{width:26px;height:26px}
.panel{min-width:0}
.scroll{display:flex;height:396px;margin-top:7px;overflow:hidden}
.content{flex:1;min-width:0}
.symrow{display:flex}
.t3{width:256px;height:100px}
.t3 .sw{width:16px}
.t3 .k{border-color:#000}
.t3 li .g{width:23px}
.t3 li+li .g{margin-left:22px;width:20px;background-position:7px 0,8px 50%}
.preview{width:62px;height:62px;border:2px solid #000;border-radius:2px;margin:20px 90px 0 auto}
.btnrow{display:flex;gap:6px;margin-top:9px;padding-bottom:9px;border-bottom:1px solid #999}
.sq{width:35px;height:31px;border:1px solid #8a8a8a;border-radius:3px;background:linear-gradient(#fcfcfc,#e6e6e6)}
.sq.l{border-color:#b8b8b8}
.sq svg{width:20px;height:20px}
.sq.s{width:30px;height:30px}
.typerow{display:flex;justify-content:space-between;align-items:center;padding:10px 1px 14px 1px}
.typerow .sel{width:249px}
.props{display:grid;grid-template-columns:81px 1fr 46px;align-items:center;padding-left:10px;row-gap:11px}
.props>label,.props>span{white-space:nowrap}
.props>*:nth-child(3n+3){margin-left:10px}
.ddb svg{width:24px;height:20px}
.ddb{width:24px;height:20px}
.clr{display:flex;gap:1px;height:22px}
.clr button{flex:1;border:1px solid #8a8a8a;border-radius:3px;background:#fafafa;padding:3px 4px}
.clr .dn{flex:0 0 15px;padding:0}
.clr b{flex:1;height:16px;background:#000;border-radius:3px}
.clr .blue{background:#354f92}
.mid{margin:-2px 0}
.wid{display:flex;gap:6px}
.spin{display:flex;height:22px;border:2px solid #bababa;border-radius:3px;background:#fff;position:relative;width:81px}
.spin input{flex:1;min-width:0;width:0;border:0;background:none;padding:0 3px;outline:0}
.wid .spin{flex:1}
.unit{width:85px}
.unit select{padding-right:14px!important;padding-left:3px!important}
.focus input{outline:2px solid #2f7fd0}
.caret{position:absolute;left:52px;top:1px;width:1px;height:16px;background:#000}
.clear{position:absolute;right:21px;top:4px;width:13px;height:11px}
.ud{width:15px;display:flex;flex-direction:column;border-left:1px solid #bababa;background:linear-gradient(#fcfcfc,#e2e2e2)}
.ud button{flex:1}
.ud button+button{border-top:1px solid #c8c8c8}
.ud svg{width:7px;height:4px}
.sb{width:17px;flex:none;display:flex;flex-direction:column;background:#e9e9e9;border:1px solid #b4b4b4;border-radius:3px}
.sb button{height:16px;border:1px solid #a8a8a8;background:#fbfbfb;border-radius:2px;flex:none}
.sb svg{width:7px;height:4px}
.sb .thumb{flex:none;height:284px;border:1px solid #a0a0a0;border-radius:2px;background:linear-gradient(90deg,#fff,#e4e4e4)}
.sb i{flex:1}
h3{display:flex;align-items:center;color:#444;font-weight:bold;font-size:14px;padding:11px 0 0 3px;line-height:18px}
h3 .ar{margin-right:8px;width:11px;height:8px;fill:#333}
h3 i{flex:1;height:1px;background:#8a8a8a;margin-left:7px}
.rend{display:grid;grid-template-columns:137px 1fr;align-items:center;row-gap:7px;padding-top:7px}
.rend label{white-space:nowrap}
.trans{display:flex;align-items:center;gap:7px;padding-right:3px}
.trans input[type=range]{flex:1;min-width:0;margin:0;appearance:none;height:16px;background:linear-gradient(#888,#888) 0 5px/100% 1px no-repeat,linear-gradient(#888,#888) 0 9px/100% 1px no-repeat}
.trans input[type=range]::-webkit-slider-thumb{appearance:none;width:11px;height:16px;background:url("data:image/svg+xml,%3Csvg xmlns='http://www.w3.org/2000/svg' width='11' height='16'%3E%3Cpath d='M.5 2.500q0-2 2-2h6q2 0 2 2v8l-5 5-5-5z' fill='%23f4f4f4' stroke='%23888'/%3E%3C/svg%3E")}
.num{width:50px}
.blend{width:123px}
.chk{display:flex;align-items:center;justify-content:space-between;height:35px;padding-right:3px}
.rend+.chk{margin-top:3px}
.chk label,.foot label{display:flex;align-items:center;gap:6px}
.foot{display:flex;align-items:center;gap:6px;margin-top:11px}
.foot label{margin-left:auto;margin-right:4px}
.apply{width:93px;height:28px;border:2px solid #bababa;border-radius:3px;background:linear-gradient(#fafafa,#e0e0e0)}
.rdock .split{height:12px}
.rdock .split i{width:184px}
.search{height:22px;flex:none;border:2px solid #bababa;border-radius:3px;padding:0 3px;margin-top:3px;background:#fff}
.search::placeholder{color:#888;opacity:1}
.ptree{flex:1;min-height:0;display:flex;border:2px solid #bababa;border-radius:3px;background:#fff}
.t4{border:0;flex:1;min-height:0}
.ptree .sb .thumb{height:26px}
.tree li.f18{height:17px}
.t4 li svg{margin-right:3px}
.t4 .v+.g{width:20px}

.status{display:flex;align-items:center;flex:none;height:35px;padding:1px 17px 0 6px}
.msg{flex:1}
.status label{white-space:nowrap;margin-right:3px}
.coord{width:245px;height:22px;border:2px solid #bababa;border-radius:3px;text-align:center;background:#fff;margin-right:4px}
.gap{margin-left:13px}
.gap2{margin-left:9px}
.gap3{margin-left:17px}
.scale{width:99px;margin-right:9px}
div.scale select{padding:0 13px 0 0;background-color:#fff;background-image:url("data:image/svg+xml,%3Csvg xmlns='http://www.w3.org/2000/svg' width='12' height='20'%3E%3Cpath d='M0 0h12v20H0z' fill='%23eee'/%3E%3Cpath d='M.5 0v20' stroke='%23bababa'/%3E%3Cpath d='M3 8h7l-3.500 4z'/%3E%3C/svg%3E");background-position:right center;background-repeat:no-repeat}
.lock{width:14px;height:20px}
.render{display:flex;align-items:center;gap:6px;margin-left:6px}
.epsg{gap:4px;margin:0 24px 0 15px}
.epsg svg{width:20px;height:20px}
.bub{width:20px;height:20px}

.taskbar{display:flex;flex:none;height:50px;background:#131616;color:#fff;font:14px/20px "Open Sans",sans-serif}
.start{width:60px}
.start svg{width:20px;height:20px}
.find{width:430px;display:flex;align-items:center;background:#f2f2f2;padding:0 18px 0 11px;color:#333}
.find svg{width:28px;height:28px}
.find input{flex:1;min-width:0;border:0;background:none;font-size:16px;padding:0 11px}
.find input::placeholder{color:#444;opacity:1}
.find .mic{width:16px;height:22px}
.app{width:62px}
.app svg{width:28px;height:28px}
.tv svg{width:24px;height:24px}
.task{height:50px;padding:3px 0 0 7px;border-bottom:3px solid #76b9ed;justify-content:flex-start;gap:6px;white-space:nowrap}
.task svg{width:28px;height:28px}
.w1{width:190px;margin-left:7px;padding-left:8px;gap:4px}
.w2{width:190px;margin-left:11px;gap:8px}
.w3{width:200px;margin-left:6px;padding-left:11px;gap:8px}
.act{background:#434341}
.tray{margin-left:auto;display:flex;align-items:center;gap:9px;padding-right:9px;margin-right:5px;height:50px;border-right:1px solid #555}
.tray svg{width:21px;height:18px}
.tray .ppl{width:20px;height:20px;margin-right:17px}
.tray .up{width:18px;height:12px}
.clock{display:flex;flex-direction:column;align-items:center;line-height:23px;width:88px;margin:0 5px}
.tray .note{width:32px;height:34px}
```
